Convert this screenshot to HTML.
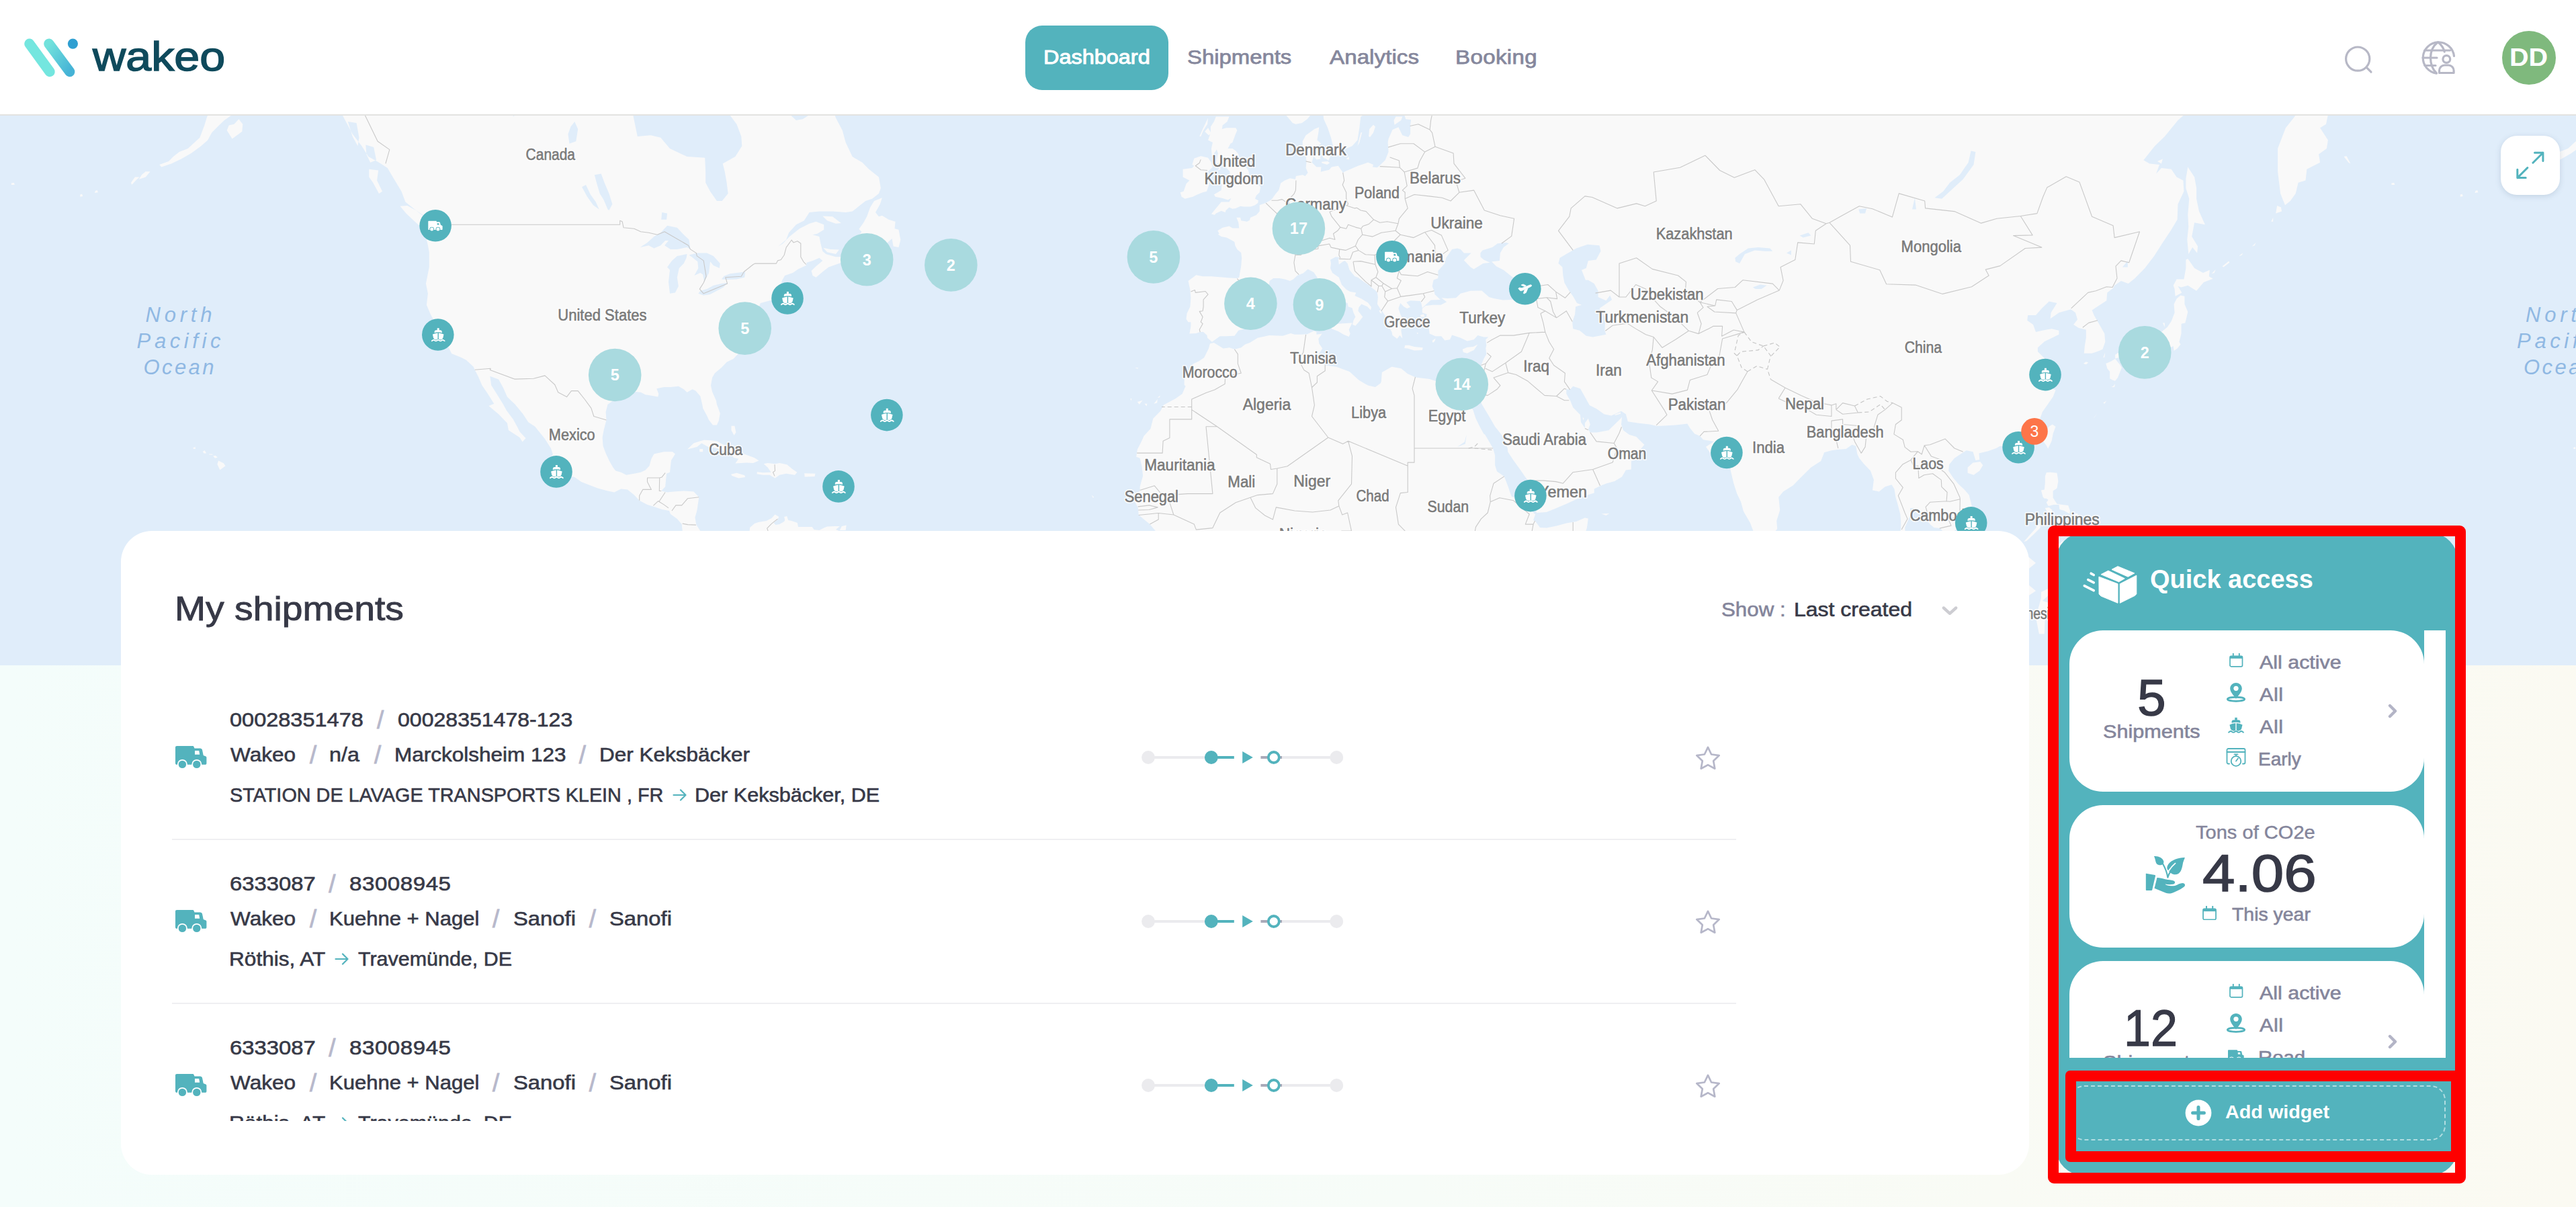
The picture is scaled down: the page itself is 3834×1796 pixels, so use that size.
<!DOCTYPE html><html lang="en"><head><meta charset="utf-8"><title>Wakeo - Dashboard</title><style>
*{box-sizing:border-box;margin:0;padding:0}
html,body{width:3834px;height:1796px;overflow:hidden}
body{position:relative;font-family:"Liberation Sans",sans-serif;background:linear-gradient(90deg,#f4fdfb 0%,#f7fcf8 55%,#fbfaf2 100%);color:#373947}
.t{position:absolute;white-space:nowrap;line-height:1;display:block;transform-origin:0 50%}
.abs{position:absolute}
header{position:absolute;left:0;top:0;width:3834px;height:172px;background:#fff;border-bottom:2px solid #e3e3e1;z-index:5}
#map{position:absolute;left:0;top:171px;width:3834px;height:819px;background:#e0edfa;overflow:hidden}
.mapsvg{position:absolute;left:0;top:0}
.mapsvg text{font-family:"Liberation Sans",sans-serif}
.lbl text{font-size:23.5px}.lbl .halo{fill:#fff;stroke:#fff;stroke-width:4px;stroke-linejoin:round;stroke-opacity:.8;fill-opacity:.8}.lbl .ink{fill:#7a7a7a;stroke:#7a7a7a;stroke-width:.55px}
.ocean text{font-size:31px;font-style:italic;fill:#8fb8e3}
.cn{font-size:23.5px;font-weight:700;fill:#fff;text-anchor:middle}
.bn{font-size:23px;fill:#fff;text-anchor:middle}
#expand{position:absolute;left:3722px;top:31px;width:88px;height:88px;border-radius:24px;background:#fff;box-shadow:0 2px 8px rgba(60,90,120,.18)}
#card{position:absolute;left:180px;top:790px;width:2840px;height:958px;border-radius:46px;background:#fff;}
#rows{position:absolute;left:0;top:210px;width:2840px;height:668px;overflow:hidden}
.hr{position:absolute;left:76px;width:2328px;height:2px;background:#efeff2}
#redbox{display:none}#redframe{position:absolute;left:3048px;top:782px;width:622px;height:979px;border:16px solid #fe0000;border-radius:9px}
#qa{position:absolute;left:3060px;top:793px;width:598px;height:956px;border-radius:41px;background:#53b3bd}
#qascroll{position:absolute;left:3080px;top:938px;width:560px;height:636px;overflow:hidden;background:linear-gradient(90deg,rgba(255,255,255,0) 0,rgba(255,255,255,0) 528px,#fff 528px)}
.w{position:absolute;left:0;width:528px;background:#fff;border-radius:50px}
#addred{position:absolute;left:3074px;top:1593px;width:590px;height:136px;border:16px solid #fe0000;border-radius:7px}
#addbtn{position:absolute;left:3080px;top:1615px;width:560px;height:82px;border:2px dashed rgba(255,255,255,.55);border-radius:22px}
</style></head><body><div id="map"><svg class="mapsvg" width="3834" height="819" viewBox="0 0 3834 819"><defs>
<g id="shipi" fill="#fff" transform="translate(.4 0)"><path d="M-1.500 -9.800h3v3h1.600c1.500 0 2.500 1 2.500 2.500v1.500c-1.800-.5-3.700-.9-5.600-.9s-3.800.4-5.600.9v-1.500c0-1.500 1-2.500 2.500-2.500h1.600z"/><path d="M-8.300 -.5c2.400-1 5-1.700 7.600-2v9.100c-.6.300-1.400.900-2.500.900s-1.900-.9-3-1.100l-1-1.900z"/><path d="M8.300 -.5c-2.400-1-5-1.700-7.600-2v9.100c.6.300 1.400.900 2.500.900s1.900-.9 3-1.100l1-1.900z"/><path d="M-10.200 9.400c1.700 0 1.700-1.500 3.400-1.500s1.700 1.500 3.400 1.500 1.700-1.500 3.400-1.500 1.700 1.500 3.400 1.500 1.700-1.500 3.400-1.500 1.700 1.500 3.400 1.500" fill="none" stroke="#fff" stroke-width="1.900"/></g>
<g id="mship"><circle r="23.8" fill="#53b3bd"/><use href="#shipi"/></g>
<g id="trucki"><path fill="#fff" d="M-10 -7h11.600v1.500h3.800c.8 0 1.300.4 1.500 1.200l.9 3.300 2.100.9c.4.200.6.500.6 1v4.600c0 .5-.3.800-.8.800h-19.700c-.5 0-.800-.3-.800-.800v-11.700c0-.5.300-.800.800-.800z"/><path d="M2.500 -3.600h2.600l.5 2.400h-3.100z" fill="#53b3bd"/><circle cx="-5.400" cy="5.300" r="3.400" fill="#53b3bd"/><circle cx="3.800" cy="5.300" r="3.400" fill="#53b3bd"/><circle cx="-5.400" cy="5.300" r="2.500" fill="#fff"/><circle cx="3.800" cy="5.300" r="2.500" fill="#fff"/></g>
<g id="mtruck"><circle r="23.800" fill="#53b3bd"/><use href="#trucki"/></g>
<g id="mplane"><circle r="23.800" fill="#53b3bd"/><g fill="#fff" stroke="#fff" stroke-width=".8" stroke-linejoin="round"><path d="M-10 -.5l1.700-1.200 3.400.6 12.400-4.700c1-.3 2.200-.1 2.300.8.100.7-.4 1.200-1 1.500l-4.800 2.500-9.500 4-1.700-.2z"/><path d="M-.6 1.400l4.700-2-2.600 6.200-3 1.500-.9-.6z"/><path d="M-5.800 -5.600l3-1.300 4.300 2.200-2.100 1.300z"/></g></g>
</defs>
<path d="M186.2 -65.1L311.1 -65.1L311.1 -1.3L308.2 2.5L304.3 15.6L297.4 33.8L279.7 49.9L266.9 55.1L258.0 62.1L251.1 69.0L237.3 74.1L240.3 77.5L255.1 72.4L269.8 65.5L284.6 56.9L299.3 46.3L309.2 37.4L315.1 26.6L323.9 17.4L333.8 8.1L341.6 2.5L346.6 -1.3L346.6 -65.1L508.9 -65.1L508.9 -1.3L514.8 10.0L524.7 28.4L538.4 46.3L548.3 62.1L564.0 70.7L576.8 79.1L587.7 97.5L597.5 113.7L603.4 129.6L619.1 142.0L630.9 149.7L645.7 158.8L649.6 163.3L652.6 173.8L654.6 187.0L648.7 185.5L650.6 176.7L643.7 176.0L631.9 172.3L636.9 194.2L638.8 204.2L638.8 226.6L633.9 251.1L636.9 265.8L634.9 282.7L640.8 296.8L648.7 310.7L653.6 315.7L654.6 323.1L659.5 330.5L665.4 341.5L672.3 355.3L686.1 360.7L693.9 364.8L704.7 374.8L706.7 379.5L711.6 388.8L717.5 402.6L725.4 414.0L735.3 429.7L727.4 433.0L742.1 445.2L754.9 458.4L756.9 469.2L773.6 480.0L777.6 486.4L782.5 481.1L773.6 471.4L769.7 463.8L763.8 452.9L753.9 439.7L749.0 430.8L742.1 419.6L731.3 402.6L729.3 388.8L742.1 393.4L749.0 406.0L754.9 419.6L766.7 430.8L778.5 445.2L786.4 457.3L796.3 463.8L811.0 482.1L819.9 496.0L822.8 504.5L819.9 512.9L825.8 522.3L832.7 527.5L842.5 535.8L855.3 538.9L865.1 546.1L876.0 550.3L889.7 555.4L904.5 559.5L914.3 561.5L924.2 556.4L934.0 557.4L943.9 565.6L951.7 573.8L963.5 579.9L973.4 582.9L985.2 586.9L996.0 589.0L998.0 594.0L1007.8 601.1L1014.7 609.1L1015.7 619.1L1025.5 623.1L1035.4 631.1L1042.3 636.0L1047.2 637.0L1057.0 644.0L1066.9 646.0L1071.8 636.0L1076.7 629.1L1086.5 634.1L1091.5 644.0L1096.4 648.9L1098.4 632.1L1091.5 625.1L1076.7 623.1L1063.9 630.1L1052.1 628.1L1042.3 619.1L1036.4 610.1L1034.4 599.0L1037.3 589.0L1039.3 575.8L1040.3 568.7L1032.4 560.5L1017.7 559.5L1002.9 560.5L993.1 561.5L984.2 559.5L990.1 553.3L991.1 543.1L992.1 533.7L997.0 531.7L998.0 522.3L999.0 513.9L1004.9 504.5L1000.9 501.3L988.1 501.3L973.4 504.5L969.4 511.8L966.5 522.3L960.6 528.6L953.7 531.7L943.9 533.7L932.1 535.8L924.2 531.7L916.3 529.6L912.4 524.4L906.5 513.9L901.6 503.4L897.6 492.8L896.6 480.0L898.6 469.2L902.5 454.0L901.6 441.9L904.5 430.8L914.3 424.1L924.2 417.4L934.0 411.7L943.9 411.7L953.7 412.8L960.6 416.2L968.5 417.4L979.3 419.6L980.3 415.1L977.3 407.2L988.1 404.9L998.0 404.9L1009.8 403.7L1017.7 408.3L1022.6 412.8L1030.5 408.3L1035.4 410.6L1042.3 418.5L1045.2 430.8L1046.2 436.4L1052.1 447.4L1055.1 454.0L1061.0 461.6L1066.9 461.6L1069.8 455.1L1071.8 444.1L1066.9 430.8L1065.9 425.2L1060.0 411.7L1058.0 402.6L1060.0 391.1L1063.9 384.2L1073.8 376.0L1081.6 367.8L1091.5 363.1L1099.3 354.7L1106.2 353.5L1115.1 347.5L1113.1 335.4L1111.1 326.8L1108.2 319.4L1107.2 306.9L1111.1 309.4L1112.1 323.1L1117.1 313.2L1120.0 305.7L1117.1 296.8L1122.0 300.6L1126.9 295.5L1130.8 282.7L1131.8 280.1L1150.5 274.9L1152.5 271.0L1160.3 268.4L1164.3 267.1L1170.2 265.8L1170.2 261.8L1164.3 263.1L1162.3 252.5L1164.3 245.7L1168.2 239.0L1180.0 234.9L1187.9 229.4L1199.7 223.9L1200.7 219.7L1209.5 216.9L1219.4 212.7L1224.3 216.9L1214.5 225.2L1207.6 232.1L1209.5 239.0L1214.5 241.7L1224.3 233.5L1233.2 226.6L1248.9 221.1L1258.7 216.9L1268.6 208.5L1265.6 194.2L1258.7 197.1L1253.8 211.3L1244.0 211.3L1234.1 208.5L1229.2 207.0L1224.3 202.8L1221.4 191.3L1219.4 181.1L1209.5 178.2L1216.4 176.7L1226.3 170.8L1226.3 163.3L1214.5 158.8L1204.6 161.8L1189.9 169.3L1175.1 181.1L1165.3 191.3L1158.4 195.6L1170.2 185.5L1174.1 175.2L1184.9 163.3L1196.8 157.3L1204.6 145.1L1219.4 143.6L1239.1 143.6L1258.7 145.1L1268.6 143.6L1278.4 135.8L1288.3 128.0L1298.1 124.8L1308.0 116.9L1310.9 108.9L1308.0 92.5L1293.2 80.8L1283.4 70.7L1268.6 62.1L1258.7 41.0L1253.8 22.9L1244.0 4.4L1239.1 -8.9L1239.1 -65.1ZM3728.6 -65.1L3853.6 -65.1L3853.6 -1.3L3850.6 2.5L3846.7 15.6L3839.8 33.8L3822.1 49.9L3809.3 55.1L3800.5 62.1L3793.6 69.0L3779.8 74.1L3782.8 77.5L3797.5 72.4L3812.3 65.5L3827.0 56.9L3841.8 46.3L3851.6 37.4L3857.5 26.6L3866.4 17.4L3876.2 8.1L3884.1 2.5L3889.0 -1.3L3889.0 -65.1L4051.4 -65.1L4051.4 -1.3L4057.3 10.0L4067.1 28.4L4080.9 46.3L4090.7 62.1L4106.5 70.7L4119.3 79.1L4130.1 97.5L4140.0 113.7L4145.9 129.6L4161.6 142.0L4173.4 149.7L4188.2 158.8L4192.1 163.3L4195.1 173.8L4197.0 187.0L4191.1 185.5L4193.1 176.7L4186.2 176.0L4174.4 172.3L4179.3 194.2L4181.3 204.2L4181.3 226.6L4176.4 251.1L4179.3 265.8L4177.3 282.7L4183.2 296.8L4191.1 310.7L4196.0 315.7L4197.0 323.1L4201.9 330.5L4207.8 341.5L4214.7 355.3L4228.5 360.7L4236.4 364.8L4247.2 374.8L4249.2 379.5L4254.1 388.8L4260.0 402.6L4267.9 414.0L4277.7 429.7L4269.8 433.0L4284.6 445.2L4297.4 458.4L4299.4 469.2L4316.1 480.0L4320.0 486.4L4324.9 481.1L4316.1 471.4L4312.2 463.8L4306.2 452.9L4296.4 439.7L4291.5 430.8L4284.6 419.6L4273.8 402.6L4271.8 388.8L4284.6 393.4L4291.5 406.0L4297.4 419.6L4309.2 430.8L4321.0 445.2L4328.9 457.3L4338.7 463.8L4353.5 482.1L4362.3 496.0L4365.3 504.5L4362.3 512.9L4368.2 522.3L4375.1 527.5L4385.0 535.8L4397.8 538.9L4407.6 546.1L4418.4 550.3L4432.2 555.4L4447.0 559.5L4456.8 561.5L4466.6 556.4L4476.5 557.4L4486.3 565.6L4494.2 573.8L4506.0 579.9L4515.8 582.9L4527.7 586.9L4538.5 589.0L4540.4 594.0L4550.3 601.1L4557.2 609.1L4558.2 619.1L4568.0 623.1L4577.8 631.1L4584.7 636.0L4589.6 637.0L4599.5 644.0L4609.3 646.0L4614.2 636.0L4619.2 629.1L4629.0 634.1L4633.9 644.0L4638.8 648.9L4640.8 632.1L4633.9 625.1L4619.2 623.1L4606.4 630.1L4594.6 628.1L4584.7 619.1L4578.8 610.1L4576.9 599.0L4579.8 589.0L4581.8 575.8L4582.8 568.7L4574.9 560.5L4560.1 559.5L4545.4 560.5L4535.5 561.5L4526.7 559.5L4532.6 553.3L4533.6 543.1L4534.5 533.7L4539.5 531.7L4540.4 522.3L4541.4 513.9L4547.3 504.5L4543.4 501.3L4530.6 501.3L4515.8 504.5L4511.9 511.8L4509.0 522.3L4503.1 528.6L4496.2 531.7L4486.3 533.7L4474.5 535.8L4466.6 531.7L4458.8 529.6L4454.8 524.4L4448.9 513.9L4444.0 503.4L4440.1 492.8L4439.1 480.0L4441.1 469.2L4445.0 454.0L4444.0 441.9L4447.0 430.8L4456.8 424.1L4466.6 417.4L4476.5 411.7L4486.3 411.7L4496.2 412.8L4503.1 416.2L4510.9 417.4L4521.7 419.6L4522.7 415.1L4519.8 407.2L4530.6 404.9L4540.4 404.9L4552.3 403.7L4560.1 408.3L4565.0 412.8L4572.9 408.3L4577.8 410.6L4584.7 418.5L4587.7 430.8L4588.7 436.4L4594.6 447.4L4597.5 454.0L4603.4 461.6L4609.3 461.6L4612.3 455.1L4614.2 444.1L4609.3 430.8L4608.3 425.2L4602.4 411.7L4600.5 402.6L4602.4 391.1L4606.4 384.2L4616.2 376.0L4624.1 367.8L4633.9 363.1L4641.8 354.7L4648.7 353.5L4657.5 347.5L4655.6 335.4L4653.6 326.8L4650.7 319.4L4649.7 306.9L4653.6 309.4L4654.6 323.1L4659.5 313.2L4662.5 305.7L4659.5 296.8L4664.4 300.6L4669.4 295.5L4673.3 282.7L4674.3 280.1L4693.0 274.9L4694.9 271.0L4702.8 268.4L4706.7 267.1L4712.6 265.8L4712.6 261.8L4706.7 263.1L4704.8 252.5L4706.7 245.7L4710.7 239.0L4722.5 234.9L4730.4 229.4L4742.2 223.9L4743.2 219.7L4752.0 216.9L4761.8 212.7L4766.8 216.9L4756.9 225.2L4750.0 232.1L4752.0 239.0L4756.9 241.7L4766.8 233.5L4775.6 226.6L4791.4 221.1L4801.2 216.9L4811.0 208.5L4808.1 194.2L4801.2 197.1L4796.3 211.3L4786.4 211.3L4776.6 208.5L4771.7 207.0L4766.8 202.8L4763.8 191.3L4761.8 181.1L4752.0 178.2L4758.9 176.7L4768.7 170.8L4768.7 163.3L4756.9 158.8L4747.1 161.8L4732.3 169.3L4717.6 181.1L4707.7 191.3L4700.8 195.6L4712.6 185.5L4716.6 175.2L4727.4 163.3L4739.2 157.3L4747.1 145.1L4761.8 143.6L4781.5 143.6L4801.2 145.1L4811.0 143.6L4820.9 135.8L4830.7 128.0L4840.6 124.8L4850.4 116.9L4853.4 108.9L4850.4 92.5L4835.7 80.8L4825.8 70.7L4811.0 62.1L4801.2 41.0L4796.3 22.9L4786.4 4.4L4781.5 -8.9L4781.5 -65.1ZM1275.5 184.0L1282.4 173.8L1278.4 170.0L1285.3 160.3L1290.2 151.2L1295.2 137.4L1301.1 128.0L1312.9 123.3L1309.9 132.7L1303.0 145.1L1308.0 151.2L1312.9 149.7L1322.7 155.8L1332.6 158.8L1331.6 169.3L1337.5 170.8L1339.4 181.1L1340.4 185.5L1337.5 197.1L1329.6 195.6L1327.6 184.0L1317.8 192.7L1308.9 194.2L1312.9 185.5L1303.0 184.0L1288.3 182.6ZM1224.3 150.5L1239.1 151.2L1251.9 161.1L1244.0 161.8L1231.2 157.3ZM1225.3 197.8L1236.1 199.9L1248.9 200.6L1244.0 207.0L1231.2 204.2ZM595.5 135.8L604.4 146.6L614.2 155.8L624.1 164.8L631.9 170.0L643.7 173.8L644.7 167.8L638.8 158.8L629.0 149.7L619.1 142.0L606.3 135.0ZM549.3 80.8L563.1 82.5L561.1 97.5L569.0 113.7L564.0 116.9L555.2 100.7L549.3 92.5ZM337.7 22.9L345.6 35.6L360.3 24.8L361.3 13.7L355.4 6.3L348.5 13.7L340.7 15.6ZM544.4 44.6L556.2 48.1L560.1 67.2L551.2 70.7L545.3 58.6ZM517.8 10.0L530.6 11.9L534.5 33.8L532.5 46.3L524.7 32.0L520.7 19.3ZM206.8 95.8L216.7 92.5L223.6 84.2L216.7 84.2L210.8 89.2ZM3749.3 95.8L3759.1 92.5L3766.0 84.2L3759.1 84.2L3753.2 89.2ZM196.0 104.0L203.9 95.8L207.8 92.5L200.9 92.5L195.0 100.7ZM3738.5 104.0L3746.3 95.8L3750.3 92.5L3743.4 92.5L3737.5 100.7ZM140.9 116.1L145.8 115.3L144.8 112.1L141.9 112.9ZM3683.4 116.1L3688.3 115.3L3687.3 112.1L3684.4 112.9ZM119.3 121.7L123.2 120.9L122.2 117.7L119.3 118.5ZM3661.7 121.7L3665.7 120.9L3664.7 117.7L3661.7 118.5ZM16.9 104.0L21.8 104.0L20.9 101.1L16.9 101.5ZM3559.4 104.0L3564.3 104.0L3563.3 101.1L3559.4 101.5ZM1023.1 497.6L1032.4 488.5L1042.3 485.3L1048.2 483.7L1057.0 484.3L1066.9 485.3L1076.7 490.7L1086.5 492.8L1096.4 498.1L1106.2 503.9L1114.1 507.1L1123.0 510.3L1129.4 514.5L1121.0 518.1L1111.1 517.6L1094.4 518.6L1099.3 511.8L1091.5 509.7L1086.5 501.3L1076.7 499.2L1066.9 496.0L1054.1 493.9L1050.1 491.7L1044.2 488.5L1037.3 493.9L1029.5 496.0ZM1126.4 534.3L1135.7 535.8L1145.6 535.8L1153.5 540.5L1160.3 535.8L1170.2 533.7L1183.0 535.8L1186.4 531.7L1180.0 527.5L1171.2 520.2L1160.3 518.1L1153.5 519.2L1142.6 518.1L1136.7 519.2L1142.6 524.4L1147.6 531.7L1135.7 532.2L1126.9 531.2ZM1088.0 534.8L1096.4 532.7L1108.2 536.3L1109.2 538.9L1099.3 540.5L1089.5 536.9ZM1197.2 533.2L1213.5 533.7L1212.5 537.9L1197.7 538.4ZM1088.5 462.7L1093.4 462.7L1095.4 472.5L1092.5 476.8L1088.5 469.2ZM1041.3 497.1L1046.2 497.1L1046.2 501.3L1041.3 501.3ZM1249.9 618.1L1252.8 612.1L1259.7 610.6L1258.7 618.1ZM1092.5 647.0L1097.4 632.1L1103.3 638.0L1108.2 630.1L1115.1 624.1L1116.1 614.1L1123.0 608.1L1128.9 606.1L1140.7 604.1L1148.5 600.1L1153.5 594.5L1159.4 598.0L1157.4 602.1L1151.5 607.1L1154.4 610.1L1160.3 609.1L1167.2 605.1L1168.2 603.1L1167.2 598.0L1171.2 597.0L1173.1 603.1L1178.1 604.1L1186.9 607.1L1187.9 613.1L1199.7 613.1L1208.6 613.1L1211.5 617.1L1219.4 618.1L1227.3 614.1L1231.2 612.6L1242.0 612.1L1249.9 612.1L1244.0 617.1L1253.8 621.1L1260.7 626.1L1268.6 634.1L1283.4 648.9L1298.1 658.9L1298.1 718.0L1071.8 718.0L1086.5 693.4L1098.4 678.6L1096.4 658.9ZM1802.9 147.4L1804.9 145.1L1813.7 134.3L1817.7 129.6L1829.5 129.6L1832.4 124.1L1827.5 126.4L1819.6 124.1L1808.8 121.7L1806.8 118.5L1817.7 112.1L1818.7 102.4L1812.8 104.0L1815.7 98.3L1813.7 94.2L1824.6 95.8L1829.5 94.2L1830.5 84.2L1825.5 79.1L1823.6 74.1L1827.5 68.1L1819.6 70.7L1809.8 72.4L1811.8 62.1L1812.8 56.9L1810.8 51.6L1803.9 62.1L1802.9 49.9L1804.9 41.0L1798.0 37.4L1801.9 26.6L1801.9 17.4L1806.8 10.0L1809.8 2.5L1824.6 2.5L1829.5 2.5L1826.5 10.0L1819.6 15.6L1818.7 21.1L1825.5 19.3L1839.3 19.3L1841.3 22.9L1838.3 30.2L1834.4 41.0L1831.4 42.8L1827.5 49.9L1834.4 49.9L1839.3 53.4L1843.3 58.6L1845.2 67.2L1847.2 74.1L1855.1 79.1L1858.0 82.5L1860.0 90.9L1857.0 92.5L1862.0 99.1L1861.0 102.4L1863.9 101.5L1871.8 102.4L1876.2 107.2L1874.7 115.3L1869.8 120.1L1867.9 124.8L1872.8 127.2L1872.3 131.1L1867.9 134.3L1861.5 136.6L1851.1 136.6L1846.2 135.8L1839.3 138.9L1834.4 139.7L1829.5 137.4L1824.6 142.0L1823.6 145.1L1817.7 142.8L1809.8 146.6L1807.8 148.8ZM1796.0 113.7L1800.0 102.4L1799.0 95.8L1798.0 84.2L1804.9 77.5L1802.9 70.7L1798.0 63.8L1787.2 61.2L1777.3 64.7L1774.4 74.1L1777.3 75.8L1774.4 79.1L1760.6 80.8L1760.6 92.5L1770.4 97.5L1765.5 102.4L1761.6 113.7L1756.7 115.3L1758.6 121.7L1763.6 124.8L1775.4 121.7L1780.3 119.3L1790.1 115.3ZM1785.2 32.0L1790.1 21.1L1798.0 4.4L1797.0 13.7L1791.1 22.9L1787.2 32.0ZM1793.1 24.8L1798.0 19.3L1802.9 27.5L1799.0 30.2ZM1811.8 83.4L1815.7 77.5L1816.7 80.8ZM1825.5 -4.2L1831.4 -5.1L1832.4 -1.3L1826.5 -2.3ZM1908.2 -65.1L1911.2 -10.9L1914.1 0.6L1923.9 11.9L1928.4 13.7L1937.7 11.9L1945.6 6.3L1953.5 -3.2L1962.3 -10.9L1966.3 -7.0L1969.2 -3.2L1970.2 6.3L1976.1 19.3L1981.0 33.8L1984.0 46.3L1985.9 56.9L1986.9 60.3L1998.7 60.3L2000.7 51.6L2012.5 46.3L2020.4 37.4L2023.3 19.3L2025.3 2.5L2032.2 -1.3L2041.0 -14.7L2041.0 -65.1ZM2037.1 32.0L2038.1 21.1L2044.0 14.7L2046.9 17.4L2044.0 26.6L2039.1 32.9ZM2020.4 46.3L2025.3 26.6L2027.3 25.7L2023.3 41.0ZM2074.5 8.1L2077.5 2.5L2087.3 2.5L2085.3 8.1L2078.4 12.8L2075.5 14.7ZM2076.5 -3.2L2081.4 -7.0L2085.3 -3.2L2081.4 0.6ZM1968.2 55.1L1974.1 50.7L1983.0 48.1L1983.0 56.9L1979.1 63.8L1977.1 68.1L1974.1 65.5L1969.2 63.8ZM1955.4 58.6L1964.3 56.9L1965.3 65.5L1959.4 66.4L1955.4 62.1ZM1967.2 69.8L1976.1 69.0L1979.1 71.5L1975.1 74.1L1967.2 71.5ZM2003.7 65.5L2007.6 62.1L2008.1 66.4ZM2088.3 -65.1L2088.3 -8.9L2090.2 -0.4L2092.2 6.3L2100.1 7.2L2099.1 15.6L2099.1 28.4L2096.1 32.9L2087.3 30.2L2081.4 18.3L2072.5 22.0L2066.6 35.6L2065.6 41.0L2066.6 55.1L2061.7 67.2L2054.8 74.1L2049.9 78.3L2043.0 77.5L2044.0 74.1L2036.1 70.7L2021.4 75.8L2001.7 84.2L1998.7 85.9L1991.8 75.8L1982.0 77.5L1978.1 81.7L1967.2 84.2L1965.8 85.0L1966.3 77.5L1959.4 77.5L1952.5 70.7L1954.4 63.8L1957.4 56.9L1959.4 47.2L1966.3 42.8L1960.4 37.4L1962.3 26.6L1963.3 18.3L1956.4 21.1L1943.6 30.2L1938.7 39.2L1938.7 49.9L1938.7 57.7L1943.6 62.1L1944.6 69.0L1943.6 79.1L1946.6 85.9L1942.6 90.9L1938.7 89.2L1928.9 90.9L1927.9 95.8L1920.0 94.2L1912.1 97.5L1906.2 101.5L1903.3 112.1L1898.4 117.7L1893.4 124.8L1890.5 127.2L1883.6 131.1L1874.7 134.3L1874.7 143.6L1869.8 148.9L1861.0 152.8L1860.0 156.5L1856.0 158.8L1847.2 157.3L1846.2 152.8L1840.3 152.8L1843.3 160.3L1844.2 168.6L1834.4 168.6L1829.5 165.6L1819.6 167.8L1812.3 172.3L1814.7 176.7L1812.8 177.7L1817.7 181.1L1825.5 182.6L1831.4 185.5L1837.4 189.1L1838.3 194.2L1841.3 199.9L1847.2 204.9L1848.2 212.7L1847.2 225.2L1844.2 241.7L1841.3 243.0L1829.5 242.4L1821.6 241.7L1802.9 240.3L1790.1 240.3L1780.3 238.3L1768.5 247.1L1771.4 260.5L1772.4 272.3L1771.4 285.3L1766.5 295.5L1765.5 303.8L1768.5 308.2L1772.4 308.2L1772.4 314.4L1770.4 325.6L1780.3 325.0L1786.2 323.1L1791.1 323.1L1796.5 328.1L1797.0 331.7L1803.9 337.8L1806.4 336.0L1815.7 329.3L1824.6 329.3L1837.4 328.7L1843.3 320.7L1852.1 318.2L1854.1 309.4L1861.0 303.8L1856.0 294.9L1861.0 285.3L1867.9 278.2L1871.8 273.6L1880.6 269.7L1890.5 263.1L1891.5 257.8L1888.5 253.8L1889.5 247.1L1895.4 243.0L1904.3 243.0L1912.1 244.4L1920.0 247.1L1924.9 244.4L1930.8 239.0L1939.7 235.6L1946.6 229.4L1955.4 234.2L1960.4 241.7L1962.3 249.1L1968.2 256.5L1975.1 260.5L1980.0 265.1L1986.9 271.7L1994.8 272.3L1999.7 277.5L2005.6 280.1L2006.6 285.3L2012.5 287.2L2014.5 294.3L2017.4 300.6L2014.5 305.7L2013.0 311.9L2017.4 313.8L2022.3 308.2L2028.3 300.6L2021.4 291.7L2022.3 286.6L2026.3 281.4L2035.1 285.3L2040.1 290.4L2041.0 285.9L2036.1 279.5L2026.3 273.6L2016.4 269.0L2018.4 264.4L2009.6 263.1L2003.7 259.8L1996.8 252.5L1992.8 241.7L1983.0 234.9L1980.0 228.0L1981.0 221.1L1980.0 215.5L1987.9 211.3L1994.3 212.0L1991.8 214.1L1992.8 222.5L1998.7 218.3L2001.7 216.9L2005.6 221.1L2008.6 230.8L2016.4 240.3L2020.9 241.7L2030.2 248.4L2037.1 253.1L2041.0 256.5L2046.9 261.1L2049.9 264.4L2050.9 271.0L2049.9 281.4L2054.8 289.2L2057.8 293.0L2062.7 300.6L2066.6 308.8L2078.4 309.4L2084.3 313.2L2075.5 310.1L2068.6 310.7L2066.6 314.4L2071.5 323.1L2072.5 328.1L2079.4 333.0L2083.4 328.1L2087.3 332.4L2085.3 320.7L2087.3 314.4L2092.2 314.4L2095.7 317.6L2095.2 310.7L2087.3 303.2L2084.3 296.8L2081.4 287.9L2084.3 280.1L2089.3 285.3L2094.2 287.9L2099.1 285.9L2093.2 278.8L2099.1 276.2L2113.9 276.9L2115.3 280.1L2116.8 287.2L2121.7 282.7L2129.6 275.6L2143.9 274.9L2135.5 267.1L2134.5 261.8L2131.6 255.1L2133.5 245.7L2140.4 243.0L2140.4 232.1L2150.3 221.1L2152.2 212.7L2161.1 199.9L2169.0 198.5L2173.9 199.9L2178.8 205.6L2189.6 205.6L2178.8 216.2L2188.6 226.6L2193.6 229.4L2207.3 221.1L2217.7 219.7L2208.3 215.5L2203.4 211.3L2203.4 205.6L2206.4 201.4L2221.1 197.1L2229.0 191.3L2241.8 189.9L2245.7 191.3L2237.8 197.1L2232.9 205.6L2231.9 216.9L2220.1 218.3L2227.0 225.2L2237.8 230.8L2249.7 240.3L2262.4 248.4L2268.4 259.1L2268.4 267.1L2254.6 274.9L2249.7 274.9L2236.9 275.6L2223.1 273.0L2216.2 271.0L2205.4 261.4L2188.6 261.8L2173.9 265.8L2167.0 272.3L2154.2 273.0L2145.3 272.3L2153.2 278.2L2144.4 282.7L2132.6 282.7L2121.7 284.0L2116.8 287.9L2116.8 294.3L2123.7 296.8L2121.7 304.4L2117.8 309.4L2125.7 308.2L2126.7 316.9L2127.6 325.6L2136.5 329.3L2145.3 329.3L2150.3 335.4L2158.1 334.2L2161.1 327.4L2173.9 331.7L2183.7 336.6L2193.6 334.2L2199.5 328.1L2208.3 330.5L2215.2 330.5L2211.3 334.2L2212.3 342.7L2211.3 347.5L2212.3 355.9L2208.3 363.1L2204.4 372.5L2202.9 376.0L2200.9 384.8L2198.0 391.1L2195.5 393.4L2189.6 395.7L2179.8 396.3L2176.8 394.0L2179.3 408.9L2180.8 414.0L2185.7 424.1L2189.6 428.6L2196.0 433.6L2198.5 426.3L2202.4 414.0L2201.4 420.7L2205.4 430.2L2218.2 451.8L2225.1 463.8L2232.9 473.5L2237.8 480.0L2243.8 496.0L2244.2 501.3L2252.6 513.9L2262.4 527.5L2275.2 546.1L2279.2 554.4L2281.1 568.7L2284.1 581.9L2287.0 592.0L2301.8 591.0L2316.6 584.9L2331.3 578.8L2342.2 573.8L2355.9 567.7L2372.7 562.6L2372.7 556.4L2383.5 551.3L2391.4 548.2L2403.2 545.1L2414.0 538.4L2419.9 528.6L2427.8 527.5L2427.8 515.0L2435.6 512.9L2438.6 501.3L2447.4 490.7L2439.6 483.2L2435.6 478.9L2424.8 475.7L2416.0 469.2L2413.0 460.5L2414.0 449.6L2411.0 452.9L2403.2 460.5L2394.3 469.2L2376.6 472.5L2366.8 472.5L2363.8 468.1L2366.8 460.5L2363.8 451.8L2358.9 458.4L2358.9 466.0L2353.0 457.3L2352.0 446.3L2341.2 435.3L2337.2 425.2L2331.3 415.1L2331.3 408.3L2337.2 408.3L2341.2 403.7L2352.0 407.2L2358.9 419.6L2365.8 431.9L2376.6 437.5L2387.4 445.2L2398.2 447.4L2413.0 440.8L2419.9 445.2L2422.8 456.2L2437.6 458.4L2455.3 460.5L2465.2 462.7L2472.0 462.7L2493.7 461.6L2511.4 459.4L2515.3 466.0L2522.2 474.6L2530.1 477.8L2535.0 483.2L2550.8 485.9L2539.0 493.9L2545.8 503.4L2552.7 509.7L2559.6 508.7L2568.5 504.5L2572.4 493.9L2575.4 504.5L2575.4 527.5L2580.3 548.2L2585.2 563.6L2591.1 575.8L2595.0 590.0L2604.9 607.1L2609.8 620.1L2612.8 630.1L2621.6 638.0L2628.5 631.1L2636.4 626.1L2645.2 616.1L2644.2 604.1L2649.2 588.0L2647.2 568.7L2654.1 560.5L2668.8 551.3L2678.7 541.0L2695.4 524.4L2710.2 515.0L2715.1 502.3L2725.9 499.2L2734.8 498.1L2747.6 497.1L2756.4 490.7L2762.3 492.8L2764.3 504.5L2767.2 510.8L2774.1 519.2L2784.0 529.6L2788.9 543.1L2786.9 558.5L2796.8 560.5L2805.6 553.3L2815.5 550.3L2819.4 556.4L2821.4 568.7L2824.3 578.8L2828.3 594.0L2829.2 604.1L2829.2 616.1L2826.3 629.1L2826.3 639.0L2838.1 650.9L2846.0 663.8L2852.9 688.5L2877.5 703.2L2884.3 704.2L2877.5 690.4L2876.5 678.6L2865.6 657.9L2855.8 649.9L2847.9 647.0L2843.0 634.1L2836.1 626.1L2835.1 614.1L2841.0 601.1L2843.0 594.0L2843.0 584.9L2851.9 584.9L2851.9 592.0L2862.7 597.0L2872.5 609.1L2878.4 614.1L2887.3 615.1L2892.2 620.1L2890.2 632.1L2896.2 630.1L2907.0 621.1L2912.9 615.1L2923.7 610.1L2933.5 603.1L2934.5 591.0L2934.5 580.9L2930.6 565.6L2923.7 557.4L2914.8 549.2L2907.0 540.0L2900.1 529.6L2901.1 520.2L2908.9 510.8L2919.8 503.4L2926.7 499.2L2936.5 501.3L2940.4 513.9L2946.3 512.9L2945.4 503.4L2959.1 500.2L2970.9 496.0L2976.8 492.8L2982.7 492.8L2995.5 488.5L3007.3 482.1L3018.2 474.6L3022.1 469.2L3030.0 460.5L3035.9 452.9L3039.8 441.9L3047.7 430.8L3055.6 419.6L3059.5 409.4L3049.7 404.9L3058.5 398.0L3058.5 391.1L3049.7 380.7L3042.8 361.9L3032.9 352.3L3032.9 346.3L3042.8 337.2L3064.4 326.8L3064.4 320.7L3053.6 318.2L3039.8 320.7L3030.0 323.1L3026.0 311.9L3017.2 305.7L3018.2 298.1L3030.0 298.1L3038.8 287.9L3049.7 277.5L3061.5 280.1L3052.6 294.3L3051.6 303.2L3064.4 294.3L3082.1 289.2L3089.0 294.3L3092.0 304.4L3086.1 311.9L3093.9 316.9L3104.8 319.4L3104.8 331.7L3102.8 343.9L3101.8 354.7L3113.6 354.7L3124.4 351.1L3129.4 348.7L3133.3 337.8L3132.3 325.6L3125.4 313.2L3116.6 298.1L3113.6 290.4L3123.5 284.0L3135.3 276.2L3136.3 264.4L3145.1 257.8L3147.1 253.8L3156.9 247.1L3167.7 251.1L3177.6 243.0L3192.3 228.0L3206.1 209.9L3218.9 189.9L3231.7 170.8L3240.6 155.8L3241.5 132.7L3250.4 113.7L3249.4 97.5L3239.6 92.5L3231.7 80.8L3216.9 79.1L3209.1 87.5L3214.0 74.1L3199.2 72.4L3190.4 67.2L3207.1 46.3L3221.9 32.0L3241.5 8.1L3256.3 -5.1L3256.3 -65.1ZM3256.3 77.5L3266.1 92.5L3269.1 108.9L3269.1 124.8L3273.0 143.6L3281.9 163.3L3266.1 160.3L3262.2 181.1L3271.1 195.6L3270.1 205.6L3263.2 197.1L3257.3 207.0L3255.3 185.5L3257.3 166.3L3256.3 148.2L3258.3 124.8L3253.4 108.9L3253.4 94.2ZM3428.5 -65.1L3428.5 -14.7L3413.7 4.4L3401.9 19.3L3390.1 49.9L3390.1 84.2L3394.1 116.9L3401.0 134.3L3408.8 128.0L3416.7 116.9L3420.6 100.7L3431.5 97.5L3433.4 80.8L3453.1 70.7L3451.1 58.6L3462.9 49.9L3464.9 37.4L3453.1 19.3L3462.0 13.7L3465.9 -5.1L3467.9 -65.1ZM3389.1 135.0L3395.0 137.4L3396.0 143.6L3387.2 146.6ZM3307.5 225.2L3317.3 217.6L3318.3 219.7L3309.4 226.6ZM3291.7 236.2L3297.6 230.1L3295.7 234.9ZM3332.1 209.9L3338.0 205.6L3337.0 208.5ZM3351.8 195.6L3357.7 189.9L3355.7 194.2ZM3380.3 158.8L3383.2 152.8L3383.2 158.8ZM3488.5 62.1L3495.4 70.7L3498.4 72.4L3492.5 61.2ZM3211.0 69.0L3218.9 65.5L3216.9 72.4ZM3237.6 269.7L3236.6 259.1L3234.7 253.8L3239.6 244.4L3250.4 244.4L3253.4 228.0L3253.4 215.5L3256.3 214.1L3266.1 228.0L3278.9 234.9L3288.8 230.8L3287.8 240.3L3293.7 243.7L3279.9 249.1L3269.1 261.8L3256.3 253.8L3246.5 256.5L3241.5 255.1L3247.4 264.4ZM3245.5 268.4L3251.4 269.7L3251.4 281.4L3256.3 293.0L3252.4 309.4L3246.5 310.7L3246.5 325.6L3243.5 337.8L3245.5 341.5L3240.6 347.5L3235.6 351.1L3234.7 343.9L3227.8 347.5L3224.8 354.7L3221.9 349.9L3218.9 354.7L3207.1 354.7L3206.1 358.3L3200.2 363.1L3195.3 368.4L3188.4 363.1L3188.4 354.7L3177.6 353.5L3167.7 358.3L3160.9 359.5L3148.1 362.5L3148.1 357.1L3157.9 349.9L3167.7 343.9L3180.5 343.3L3190.4 342.7L3197.3 341.5L3197.3 334.2L3205.1 321.9L3210.1 319.4L3207.1 328.1L3216.9 323.1L3225.8 315.7L3231.7 306.9L3236.6 294.3L3235.6 281.4L3239.6 273.6ZM3148.1 363.1L3154.9 371.3L3157.9 376.0L3152.0 391.1L3148.1 395.7L3144.1 394.6L3140.2 392.3L3140.2 381.9L3136.3 377.2L3134.3 370.1L3142.2 366.6ZM3162.8 361.9L3177.6 357.1L3183.5 359.5L3184.5 364.2L3179.6 370.1L3172.7 367.8L3167.7 376.6L3161.8 369.0ZM3218.9 309.4L3221.9 309.4L3221.9 315.7ZM3130.3 360.7L3133.3 353.5L3132.3 360.7ZM3100.8 370.1L3104.8 367.2L3108.2 368.4L3104.8 371.3ZM3115.6 451.8L3121.5 443.6L3117.6 449.6ZM3130.3 428.6L3135.3 425.2L3132.3 429.7ZM3142.2 404.9L3145.1 403.7L3148.1 400.3L3147.1 404.9ZM3054.6 460.5L3059.5 463.8L3055.6 474.6L3053.6 485.3L3048.2 496.5L3045.7 491.7L3040.8 485.3L3041.8 476.8L3046.7 468.1L3049.7 463.8ZM2928.6 524.4L2936.5 517.6L2947.3 516.0L2951.3 521.3L2946.3 529.6L2937.5 535.8L2928.6 532.7ZM3045.7 532.2L3051.6 531.7L3061.5 532.7L3063.4 545.1L3061.5 555.4L3055.6 559.5L3055.6 569.7L3061.5 578.8L3069.3 579.9L3078.2 580.9L3081.1 589.0L3080.2 593.5L3072.3 589.0L3065.4 586.9L3064.4 579.9L3056.5 579.9L3048.7 581.9L3045.7 576.8L3048.7 572.8L3045.7 570.7L3042.8 570.7L3040.8 568.7L3037.9 558.5L3042.8 557.4L3043.8 548.2L3043.8 537.9ZM3043.8 584.9L3049.7 583.9L3054.6 588.0L3052.6 596.0L3048.7 594.0ZM3082.1 594.0L3092.0 593.0L3095.9 607.1L3089.0 609.1L3087.1 601.1ZM3058.5 600.1L3070.3 603.1L3065.4 613.1L3059.5 614.1ZM3012.3 635.0L3020.1 626.1L3030.0 615.1L3034.9 605.1L3036.9 614.1L3028.0 623.1L3016.2 634.1ZM3063.4 620.1L3068.4 610.1L3074.3 610.1L3071.3 628.1ZM3082.1 604.1L3089.0 606.1L3091.0 617.1L3087.1 618.1ZM3059.5 649.9L3061.5 640.0L3072.3 633.1L3084.1 634.1L3093.9 621.1L3102.8 631.1L3103.8 648.9L3093.9 662.8L3079.2 653.9L3069.3 644.0ZM2931.6 698.3L2956.2 691.4L2970.9 683.5L2985.7 672.7L3000.5 653.9L3010.3 648.9L3017.2 655.9L3030.0 666.8L3020.1 674.7L3018.2 698.3L3030.0 708.2L3015.2 718.0L3010.3 767.3L2931.6 767.3ZM3037.9 710.1L3047.7 705.2L3069.3 709.1L3091.0 702.3L3084.1 714.1L3049.7 714.1L3039.8 722.9L3054.6 727.8L3072.3 727.8L3059.5 742.6L3067.4 762.3L3054.6 763.3L3043.8 747.5L3042.8 772.2L3034.9 772.2L3030.0 747.5L3037.9 719.0ZM3113.6 698.3L3118.5 703.2L3125.4 703.2L3118.5 713.1L3121.5 725.9L3114.6 715.0ZM2645.2 621.1L2649.2 624.1L2658.0 634.1L2664.9 646.0L2662.9 653.9L2652.1 659.8L2646.2 656.9L2644.2 647.0L2644.2 636.0ZM2796.8 662.8L2818.4 666.8L2830.2 680.6L2847.0 695.4L2857.8 701.3L2876.5 713.1L2882.4 727.8L2843.0 737.7L2823.3 703.2L2808.6 683.5ZM1981.0 313.2L1990.9 310.7L2012.5 309.4L2007.6 319.4L2009.6 325.6L2007.6 329.9L1999.7 326.8L1991.8 321.9L1982.0 318.2ZM1939.7 276.2L1949.5 271.7L1954.4 276.2L1954.4 287.9L1953.5 298.1L1948.5 298.1L1946.6 301.9L1941.7 300.6L1941.7 287.9L1939.7 280.1ZM1951.5 248.4L1952.5 255.1L1951.5 263.1L1949.5 269.7L1943.6 263.1L1943.6 256.5L1948.5 252.5ZM2091.2 342.7L2097.1 342.7L2105.0 345.1L2117.8 346.3L2116.8 349.9L2105.0 350.5L2095.2 347.5L2090.2 346.9ZM2176.8 348.7L2183.7 345.7L2192.6 345.1L2199.5 341.5L2193.6 349.9L2189.6 351.7L2183.7 354.7L2177.8 352.9ZM1882.1 293.0L1889.5 288.5L1892.9 291.7L1889.5 296.8L1885.6 295.5ZM1896.4 287.2L1901.3 288.5L1900.3 289.8L1896.4 288.5ZM1870.8 301.3L1874.7 299.4L1873.8 302.5ZM2085.3 301.9L2089.3 300.6L2097.1 305.7L2101.1 313.2L2097.1 311.9L2091.2 306.9ZM2131.6 336.0L2136.5 332.4L2135.5 336.6L2132.6 339.1ZM2113.9 298.1L2118.8 296.2L2120.7 300.6L2114.8 300.6ZM2113.9 306.3L2116.3 306.3L2115.8 310.7L2113.9 310.1ZM2120.7 315.7L2124.7 316.3L2122.7 317.6ZM2059.7 309.4L2063.7 308.2L2062.7 312.6ZM2052.4 291.1L2055.3 290.4L2056.8 295.5L2054.3 294.9ZM2108.4 323.8L2110.9 324.4L2109.9 326.2ZM2383.5 593.5L2395.3 593.0L2390.4 596.0ZM2355.4 450.7L2357.4 450.7L2356.9 454.5ZM2403.2 445.8L2412.0 442.5L2412.0 444.7L2404.1 446.9ZM1692.7 426.9L1700.6 424.7L1695.7 430.8ZM1703.5 429.7L1707.5 429.7L1706.5 433.6ZM1717.3 429.7L1722.7 423.0L1722.2 428.6ZM1722.7 420.7L1726.6 417.4L1726.2 420.2ZM1682.4 421.9L1684.3 421.9L1683.4 425.8ZM1689.3 376.0L1694.7 376.6L1692.7 377.8ZM1624.8 565.6L1628.2 568.7L1626.8 569.7ZM2176.8 394.0L2164.0 391.1L2154.2 394.6L2144.4 398.6L2127.6 392.9L2107.0 390.5L2095.2 385.3L2085.3 377.2L2071.5 374.8L2056.8 383.0L2055.8 396.9L2054.8 399.2L2046.9 404.9L2036.1 402.6L2022.3 394.6L2008.6 381.9L1988.9 374.8L1972.2 372.5L1968.2 367.8L1958.4 363.1L1964.3 353.5L1968.2 347.5L1963.3 340.3L1962.3 333.0L1967.7 325.6L1959.4 326.8L1959.4 323.1L1955.4 321.5L1945.6 326.2L1935.8 326.8L1926.9 326.8L1921.0 325.0L1909.2 328.7L1889.0 328.1L1871.8 331.7L1860.0 339.1L1853.1 341.5L1847.2 346.3L1837.4 348.7L1830.0 346.3L1820.6 347.5L1806.8 339.1L1800.9 340.3L1799.0 347.5L1792.1 361.3L1784.2 366.6L1775.4 370.7L1768.0 381.9L1762.6 391.1L1762.6 401.5L1764.5 403.7L1759.6 415.1L1749.8 421.9L1732.1 431.4L1727.1 440.8L1716.3 451.8L1712.4 467.0L1702.5 477.8L1698.6 486.4L1692.7 498.1L1691.2 508.7L1696.6 510.8L1699.6 523.3L1701.1 536.9L1696.6 553.3L1696.6 558.5L1686.8 571.7L1693.7 583.9L1694.7 595.0L1701.6 601.1L1711.4 609.1L1716.3 615.1L1724.2 624.1L1729.1 634.1L1736.0 644.0L1745.8 649.9L1752.7 655.9L1770.4 668.7L1785.2 674.7L1809.8 668.7L1839.3 668.7L1868.8 658.9L1898.4 655.9L1918.0 675.6L1947.6 678.6L1952.5 708.2L1947.6 777.1L2252.6 777.1L2262.4 727.8L2277.2 718.0L2292.0 706.2L2305.7 697.8L2326.4 676.6L2340.2 658.9L2349.0 641.0L2357.9 626.1L2361.8 615.1L2363.8 600.6L2358.9 599.5L2346.1 605.1L2331.3 607.6L2316.6 611.6L2301.8 614.6L2292.0 614.1L2285.1 604.6L2282.1 603.1L2285.1 594.5L2280.2 590.0L2275.2 582.9L2265.4 573.8L2254.6 569.7L2249.7 567.7L2247.7 562.6L2244.7 553.3L2238.8 537.9L2228.0 530.6L2225.1 521.3L2225.1 506.6L2222.1 496.0L2210.3 475.7L2208.3 474.6L2202.4 463.8L2196.5 451.8L2192.6 439.7L2188.6 431.9L2180.8 420.7L2177.8 412.8L2179.3 408.9ZM323.4 519.7L325.1 514.5L332.8 518.3L335.5 522.3L327.4 528.2ZM317.0 507.6L321.0 507.1L323.9 509.7L320.0 510.8ZM301.8 500.8L304.7 499.2L307.2 503.4L303.3 503.4ZM287.0 495.5L290.5 493.9L291.0 497.1L288.5 497.1ZM3829.5 495.5L3832.9 493.9L3833.4 497.1L3831.0 497.1ZM311.1 504.5L316.6 504.7L316.1 505.7L311.6 505.5Z" fill="#f9f9f9"/>
<path d="M929.1 -65.1L931.1 -1.3L941.9 -1.3L948.8 32.0L968.5 30.2L983.2 33.8L997.0 49.9L1022.6 62.1L1049.2 63.8L1050.1 84.2L1050.1 100.7L1057.0 113.7L1066.9 128.0L1074.7 128.0L1083.6 116.9L1081.6 100.7L1078.7 84.2L1075.7 72.4L1094.4 62.1L1104.3 46.3L1103.3 32.0L1096.4 13.7L1086.5 0.6L1091.5 -14.7L1091.5 -65.1ZM1170.2 -65.1L1174.1 -14.7L1175.1 -1.3L1184.9 8.1L1194.8 6.3L1209.5 -3.2L1214.5 -14.7L1219.4 -65.1ZM952.7 197.1L965.5 194.2L973.4 198.5L983.2 194.2L990.1 187.0L995.0 187.0L989.1 194.2L998.0 199.9L1007.8 199.9L1022.6 197.1L1027.5 199.9L1025.5 185.5L1017.7 178.2L1007.8 167.8L993.1 164.8L983.2 175.2L973.4 181.1L963.5 189.9ZM997.0 265.8L995.0 248.4L997.0 230.8L993.1 226.6L1000.0 216.9L1007.8 209.9L1022.6 207.0L1021.6 212.7L1017.7 221.1L1010.8 228.0L1007.8 241.7L1009.8 255.1L1004.9 264.4ZM1025.5 208.5L1037.3 205.6L1052.1 205.6L1061.9 209.9L1071.8 221.1L1070.8 228.0L1061.9 223.9L1057.0 218.3L1055.1 234.9L1048.2 248.4L1046.2 237.6L1042.3 234.9L1033.4 239.0L1039.3 228.0L1038.3 218.3L1029.5 211.3ZM1039.3 265.8L1047.2 268.4L1057.0 267.1L1066.9 261.8L1076.7 256.5L1082.6 249.8L1073.8 251.1L1061.9 253.8L1052.1 259.1L1042.3 261.8ZM1073.8 244.4L1081.6 245.1L1096.4 244.4L1108.2 241.7L1109.2 233.5L1096.4 234.9L1086.5 236.2L1077.7 239.7ZM906.5 142.0L911.4 132.7L906.5 116.9L899.6 100.7L894.7 87.5L884.8 89.2L888.8 104.0L892.7 116.9L898.6 126.4L904.5 140.5ZM891.7 140.5L886.8 129.6L878.9 118.5L872.0 104.0L866.1 107.2L874.0 121.7L882.9 134.3ZM847.4 42.8L857.3 39.2L860.2 21.1L855.3 10.0L849.4 17.4L845.5 28.4ZM763.8 2.5L776.6 -7.0L796.3 -14.7L796.3 -65.1L761.8 -65.1ZM984.2 155.8L992.1 155.8L993.1 146.6L985.2 145.1ZM2321.5 212.7L2331.3 207.0L2346.1 198.5L2362.8 192.7L2380.5 194.2L2382.5 202.8L2375.6 215.5L2363.8 216.9L2360.8 228.0L2354.0 230.8L2359.9 245.7L2363.8 245.7L2372.7 251.1L2378.6 261.8L2378.6 271.0L2390.4 276.2L2396.3 268.4L2399.2 274.9L2380.5 287.9L2385.4 295.5L2389.4 301.9L2388.4 320.7L2390.4 326.8L2370.7 330.5L2360.8 328.7L2351.0 320.7L2341.2 318.2L2340.2 308.2L2344.1 296.8L2345.1 285.3L2354.0 282.7L2347.1 280.1L2341.2 269.7L2335.3 261.8L2328.4 249.8L2326.4 239.0L2325.4 226.6L2319.5 221.1ZM2879.4 123.3L2890.2 124.8L2902.1 113.7L2921.7 95.8L2937.5 74.1L2940.4 55.1L2933.5 53.4L2929.6 70.7L2916.8 89.2L2902.1 100.7L2892.2 113.7ZM2582.3 212.7L2589.1 207.0L2601.9 198.5L2616.7 197.1L2634.4 198.5L2638.3 202.8L2626.5 202.8L2611.8 201.4L2597.0 207.0L2589.1 221.1L2583.2 218.3ZM2608.8 256.5L2619.6 252.5L2629.5 253.8L2621.6 259.1L2612.8 259.1ZM2182.7 475.7L2179.8 486.4L2169.0 493.9L2180.8 489.6ZM3158.9 226.6L3166.8 216.9L3166.8 226.6ZM2766.3 140.5L2778.1 138.9L2776.1 146.6L2768.2 146.6ZM2846.0 140.5L2849.9 123.3L2851.9 140.5ZM2678.7 179.6L2691.5 175.2L2695.4 179.6L2683.6 182.6ZM2659.0 205.6L2665.9 201.4L2665.9 208.5Z" fill="#e0edfa"/>
<path d="M645.7 163.3L922.7 163.3L922.7 157.3L926.2 158.8L928.1 167.8L943.9 169.3L953.7 173.8L965.5 175.2L978.3 178.2L989.1 173.8L1024.6 194.2L1027.5 199.9L1036.4 205.6L1037.3 209.9L1047.2 216.9L1051.1 240.3L1047.2 249.8L1041.3 259.1L1047.2 265.8L1082.6 251.1L1080.6 244.4L1079.7 241.7L1103.3 240.3L1107.2 233.5L1121.0 222.5L1123.9 221.1L1155.4 221.1L1157.4 216.9L1162.3 215.5L1167.2 208.5L1170.2 197.1L1178.1 186.2L1181.0 189.9L1186.9 187.7L1191.8 191.3L1191.8 211.3L1195.8 218.3L1199.7 222.5M542.4 -1.3L562.1 39.2L579.8 51.6L573.9 72.4M706.7 379.2L730.3 377.2L729.3 379.5L765.8 393.1L794.3 392.3L811.0 387.9L825.8 401.5L830.7 412.8L843.5 419.6L850.4 410.6L860.2 410.6L870.1 423.0L879.9 436.4L883.8 448.5L902.5 454.0M951.7 573.8L951.7 566.6L956.7 557.4L969.4 557.4L963.5 546.1L963.5 540.0L981.7 540.0L981.3 559.5L984.2 559.5M981.7 540.0L985.2 538.9L990.1 532.7M990.1 561.5L981.3 574.8L979.3 574.8L972.4 581.4M979.8 574.8L988.1 579.9L995.0 584.9M1000.0 589.0L1005.9 580.9L1014.7 580.9L1023.6 570.7L1040.3 568.7M1015.7 608.1L1023.6 609.6L1035.9 610.1M1043.3 638.0L1043.3 628.1L1046.2 623.1M1092.5 647.0L1099.3 640.0L1097.9 632.6M1153.0 520.2L1153.5 529.6L1150.5 531.7L1153.0 537.4M1157.4 601.1L1148.5 608.1L1141.7 615.1L1146.6 629.1M1772.4 263.1L1778.3 260.5L1779.3 264.4L1794.1 262.5L1798.0 267.1L1791.1 274.9L1791.1 285.3L1790.1 291.7L1785.2 292.4L1790.1 300.6L1787.2 308.2L1790.1 310.7L1785.2 319.4L1786.2 323.1M1841.3 243.7L1845.2 247.8L1852.1 249.8L1865.9 251.1L1873.8 255.8L1878.7 257.1L1890.0 255.8M1884.1 131.1L1890.5 137.4L1900.3 146.6L1906.2 145.9L1907.2 151.2L1916.1 155.0L1922.0 156.5L1939.7 163.3L1933.8 184.0L1927.9 187.0L1919.0 201.4L1920.0 204.2L1925.9 201.4L1927.9 208.5L1925.9 219.7L1927.9 232.1L1933.3 237.6M1892.5 127.2L1901.3 127.2L1908.2 125.6L1917.1 131.9L1918.0 136.6L1919.0 124.8L1925.9 117.7L1928.4 112.1L1928.9 97.5M1918.0 136.6L1921.0 143.6L1919.0 146.6L1923.0 151.2L1922.0 156.5M1943.6 69.0L1951.5 70.7M1998.7 85.9L2000.7 97.5L1998.2 104.0L2003.7 115.3L2003.7 124.8L2006.6 132.7L2004.6 135.0L1999.7 132.7L1986.9 141.3L1979.1 144.3L1982.0 151.2L1994.8 167.1L1990.9 172.3L1984.5 176.7L1986.9 185.5L1979.1 183.3L1967.2 187.0L1961.8 184.8L1953.5 184.8L1943.6 182.6L1933.8 184.0M1953.5 184.8L1952.5 192.0L1961.8 194.9L1961.8 199.2L1950.5 200.6L1942.1 201.4L1936.2 208.5L1927.9 208.5M1961.8 194.9L1978.6 192.0L1981.0 197.1L1993.8 199.9L1992.8 208.5L1994.8 212.7M1994.8 167.1L2003.7 169.3L2006.6 163.3L2017.4 167.1L2025.8 169.3L2027.8 178.2L2021.4 185.5L2017.4 194.9L2013.0 197.1L2002.7 201.4L1993.8 199.9M2004.6 135.0L2016.4 138.9L2019.4 138.2L2025.3 142.0L2033.2 143.6L2044.5 155.8L2037.1 162.6L2028.3 165.6L2025.8 169.3M2044.5 155.8L2053.8 160.3L2064.7 158.8L2080.9 161.8L2082.4 154.3L2095.2 138.9L2091.2 124.8L2091.2 115.3L2087.3 112.1L2094.2 105.6L2090.2 85.0L2083.4 78.3L2053.8 76.6M2083.4 78.3L2082.4 68.1L2068.6 62.9M2066.1 48.1L2084.3 42.8L2104.0 42.8L2120.7 55.1L2112.9 69.0L2109.9 79.1L2090.2 85.0M2098.6 16.5L2110.9 13.7L2128.1 22.0L2131.6 26.6L2136.0 47.2L2120.7 55.1M2128.1 22.0L2129.6 8.1L2134.5 -14.7M2136.0 47.2L2163.1 56.9L2164.0 72.4L2180.8 94.2L2167.0 99.1L2171.9 115.3L2159.1 128.0L2146.3 123.3L2126.7 120.9L2105.0 118.5L2091.2 124.8M2171.9 115.3L2193.6 112.1L2209.3 142.0L2232.9 149.7L2253.6 154.3L2249.7 180.4L2234.9 191.3M2027.8 178.2L2043.0 181.1L2055.8 175.2L2077.0 172.3L2080.9 161.8M2077.0 172.3L2084.3 178.2L2075.5 187.0L2065.6 203.5L2058.3 205.6M2084.3 178.2L2104.0 182.6L2120.7 174.5L2130.6 171.5L2145.3 178.9L2155.2 201.4L2136.5 214.8M2120.7 174.5L2135.5 194.2L2136.5 214.8L2150.8 218.3M2017.4 194.9L2021.9 201.4L2032.2 207.7L2045.0 208.5L2058.3 205.6L2069.6 218.3L2069.6 223.9L2080.4 225.2L2082.4 232.1L2085.3 237.6L2109.9 239.7L2124.7 233.5L2140.4 238.3M1992.8 214.1L2009.6 214.8L2013.5 204.2L2021.9 201.4M2082.4 232.1L2079.4 243.0L2085.3 246.4L2079.4 257.8L2084.8 270.4L2100.1 268.4L2118.3 265.8L2134.5 261.8M2118.3 265.8L2120.7 271.0L2115.3 278.2M2055.8 291.7L2062.7 281.4L2065.6 276.9L2084.8 270.4M2049.9 263.8L2051.9 254.5L2056.8 254.5L2061.7 263.1L2060.7 271.0L2065.6 276.9M2061.7 263.1L2071.5 258.5L2079.4 257.8M2014.0 218.3L2016.4 232.1L2032.2 247.8L2041.0 255.1L2041.0 245.7L2047.9 241.7L2050.9 233.5L2046.9 222.5L2025.3 217.6L2014.0 218.3M2046.0 208.5L2046.9 222.5M2041.0 245.7L2051.9 254.5M2047.9 241.7L2058.8 250.5L2056.8 254.5M2058.8 250.5L2071.5 258.5M2267.9 268.4L2277.2 269.0L2286.6 273.6L2289.0 286.6L2299.8 291.7L2293.0 295.5L2296.9 309.4L2299.8 323.1L2276.2 324.4L2252.6 328.1L2232.9 328.1L2220.1 334.8L2213.2 339.1M2276.2 324.4L2264.4 352.3L2240.8 369.0L2221.1 381.9L2210.8 377.2M2240.8 369.0L2244.7 383.6L2223.1 391.1L2232.9 402.6L2228.0 408.3L2214.2 417.4L2203.4 415.7M2244.7 383.6L2256.5 386.5L2273.3 395.7L2298.9 417.4L2316.6 418.5L2328.4 424.7L2335.3 424.7M2316.6 418.5L2328.4 407.2L2331.3 408.3M2299.8 323.1L2305.7 337.8L2312.6 348.7L2305.7 361.9L2312.6 372.5L2329.4 384.2L2328.4 396.9L2336.7 408.9M2204.4 372.5L2211.3 370.1L2208.8 380.7L2207.3 391.1L2203.4 413.4M2196.0 393.4L2202.4 414.0M2211.3 370.1L2219.2 359.5L2213.2 354.1M2252.6 243.0L2272.3 245.7L2291.0 254.5L2303.8 252.5L2315.6 263.1L2317.6 273.6L2301.8 271.7L2286.6 273.6M2315.6 263.1L2329.4 272.3L2337.2 263.8M2301.8 271.7L2307.7 277.5L2311.6 293.0L2316.6 301.9M2299.8 291.7L2316.6 301.9L2331.3 291.7L2340.2 307.6M2389.4 321.3L2400.2 313.2L2421.9 310.1L2433.7 317.6L2449.4 326.8L2461.2 330.5L2459.3 349.9L2454.3 366.6L2457.8 391.1L2467.6 396.9L2458.3 410.0L2477.0 439.1L2480.9 446.3L2465.2 461.6M2458.3 410.0L2488.8 415.1L2511.4 409.4L2515.3 394.6L2540.9 386.5L2547.8 370.1L2558.6 360.7L2563.6 333.0L2596.0 323.1M2461.2 330.5L2474.0 346.3L2493.7 334.2L2513.4 321.3L2528.1 325.6L2542.9 318.2L2549.8 314.4L2563.6 314.4L2562.6 329.3L2580.3 320.0L2596.0 323.1M2513.4 321.3L2493.7 301.9L2471.1 285.3L2459.3 272.3L2449.4 259.1L2434.6 252.5L2419.9 271.0L2410.0 271.0L2410.0 221.1L2435.6 212.7L2459.3 229.4L2497.6 239.0L2509.4 248.4L2508.5 261.8L2530.1 278.8L2556.7 258.5L2582.3 256.5L2594.1 245.7L2638.3 251.1L2648.2 261.1M2374.6 265.1L2397.3 261.1L2410.0 271.0M2648.2 261.1L2654.1 246.4L2650.1 226.6L2671.8 215.5L2675.7 189.9L2700.3 192.0L2702.3 172.3L2718.0 161.8L2697.4 154.3L2679.7 132.7L2647.2 135.8L2625.5 95.8L2611.8 81.7L2581.3 93.3L2559.6 82.5L2538.0 60.3L2500.6 78.3L2461.2 85.0L2465.2 128.0L2448.4 135.8L2435.6 131.9L2407.1 138.9L2369.7 122.5L2358.9 120.9L2338.2 138.9L2335.8 151.2L2319.5 172.3L2341.2 201.4M2648.2 261.1L2615.7 274.9L2585.2 290.4L2583.7 294.9L2596.0 323.1M2530.1 278.8L2552.7 284.0L2554.7 274.9L2577.3 277.5L2585.2 290.4M2526.2 294.3L2532.1 310.7L2528.1 325.6M2552.7 284.0L2540.9 285.3L2551.7 293.0L2583.7 294.9M2526.2 294.3L2535.0 286.6L2530.1 278.8M2718.0 161.8L2723.0 160.3L2741.7 149.7L2767.2 135.8L2786.9 139.7L2816.4 152.0L2826.3 116.9L2864.7 128.0L2865.6 138.9L2908.9 143.6L2948.3 161.1L2971.9 154.3L3007.3 150.5M2723.0 160.3L2753.5 194.2L2754.5 218.3L2797.8 230.8L2807.6 251.8L2850.9 253.1L2891.2 266.4L2934.5 255.8L2960.1 239.0L2955.2 230.1L2976.8 224.6L3014.2 198.5L3038.8 197.1L2996.5 179.6L3025.1 178.9L3007.3 150.5M3007.3 150.5L3031.9 146.6L3040.8 121.7L3046.7 108.1L3075.2 91.7L3094.9 99.9L3113.6 151.2L3145.1 164.8L3147.1 182.6L3184.5 173.8L3168.7 219.7L3156.9 216.9L3149.0 225.2L3151.0 243.0L3144.1 256.5L3135.3 255.8L3119.5 261.8L3107.7 264.4L3082.6 287.9M3099.8 316.3L3108.7 309.4L3122.0 305.7M2921.7 501.3L2908.9 496.0L2895.2 482.1L2872.5 490.7L2864.2 491.7L2860.2 505.0L2854.3 500.8L2844.0 501.3L2835.1 494.4L2832.2 483.2L2818.9 475.1L2821.4 460.5L2830.2 454.0L2830.2 435.3L2816.9 428.6L2805.6 438.6L2794.8 446.3L2785.9 475.7L2778.1 474.6L2776.1 493.9L2770.2 503.4M2735.8 496.0L2732.8 483.2L2725.9 469.2L2725.9 455.1L2742.6 452.9L2742.6 460.5L2768.2 462.7L2756.4 474.6L2760.4 485.9L2770.2 503.4M2647.2 421.9L2657.0 406.0L2680.7 417.4L2703.3 427.5L2725.9 431.9L2725.9 448.5L2703.3 446.3L2686.6 436.4L2672.8 434.1L2647.2 421.9M2732.8 438.6L2742.6 428.6L2760.4 433.0L2765.3 443.0L2742.6 445.2L2732.8 438.6M2725.9 431.9L2732.8 429.7L2732.8 438.6M2530.1 477.8L2536.0 471.4L2557.7 470.3L2548.8 454.0L2543.9 439.7L2551.7 430.8L2569.5 428.6L2586.2 408.3L2593.1 395.7L2600.9 381.9M1797.0 82.5L1787.2 81.7L1779.3 75.8L1785.2 71.5L1787.2 66.4M2635.4 393.4L2657.0 406.0M2830.2 617.1L2839.1 601.1L2835.1 592.0L2825.3 566.6L2832.2 554.4L2821.4 541.0L2821.4 532.2L2832.2 519.7L2844.0 513.4L2854.3 500.8M2844.0 513.4L2847.9 522.3L2854.8 522.3L2855.8 540.5L2863.7 535.8L2876.5 533.7L2889.3 543.1L2889.8 553.3L2898.1 561.5L2897.1 574.8L2902.1 575.3L2917.3 571.7M2864.2 491.7L2874.5 508.1L2888.3 512.9L2882.4 523.3L2894.2 531.7L2908.0 549.2L2916.8 568.7L2917.3 571.7L2916.8 595.5L2900.6 603.1L2904.0 611.1L2886.8 615.1M2897.1 574.8L2872.5 576.3L2866.1 583.4L2871.6 602.6M2844.0 654.4L2853.8 661.8L2863.7 656.4M1837.4 348.7L1842.3 355.9L1842.3 370.1L1847.2 384.2L1823.6 388.8L1823.1 400.3L1807.8 408.9L1795.0 413.4L1773.7 423.0L1773.7 438.6L1811.5 463.8L1870.3 505.5L1870.3 509.7L1890.5 519.2L1891.5 527.5L1900.8 526.0L1916.1 522.8L1976.8 480.0L1952.5 448.5L1956.4 431.9L1952.5 405.5L1948.1 384.2L1940.7 379.5L1932.8 364.2L1939.7 353.5L1943.6 326.8M1773.7 438.6L1773.7 452.9L1740.9 452.9L1740.9 480.5L1731.1 485.3L1730.1 503.1L1692.2 503.1M1811.5 463.8L1795.0 463.8L1804.9 563.6L1767.5 563.6L1753.7 564.6L1745.8 562.6L1738.9 570.7L1746.8 595.0L1777.3 609.1L1780.3 617.1L1804.9 614.6L1815.7 592.0L1839.3 576.8L1861.0 569.2L1871.8 565.6L1894.4 563.6L1900.8 549.2L1900.8 526.0M1952.5 405.5L1960.4 398.0L1960.4 388.8L1972.2 380.7L1972.2 371.9M1976.8 480.0L1998.7 489.6L2006.6 485.3L2095.2 522.3L2095.2 517.1L2105.0 517.1L2105.0 496.0L2105.0 417.4L2102.1 407.2L2106.5 390.0M2105.0 496.0L2222.1 496.0M2006.6 485.3L2012.5 507.6L2011.5 549.2L1991.8 573.8L1992.8 581.9L1980.0 588.0L1953.5 591.0L1926.9 589.0L1899.3 583.9L1894.4 602.1L1882.6 596.0L1868.8 584.9L1861.0 569.2M2095.2 522.3L2095.2 561.5L2084.3 562.6L2077.5 583.9L2081.4 609.1L2092.2 620.1M1992.8 581.9L1997.7 595.0L2005.6 592.0L2011.5 619.1L1996.8 619.1L2011.5 644.0M1696.6 558.5L1718.3 551.8L1728.1 563.6L1738.9 570.7M1693.7 582.9L1710.4 580.9L1723.2 583.9L1710.4 587.5L1694.2 588.0M1694.7 595.5L1724.2 592.5L1746.8 595.0M1711.4 609.1L1724.2 602.1L1724.2 592.5M2238.8 537.9L2223.1 548.2L2217.7 566.6L2218.2 575.8L2231.9 569.7L2252.6 573.8L2276.2 594.0L2270.3 609.1L2282.1 609.1L2284.6 604.1M2218.2 575.8L2214.2 592.0L2204.4 601.1L2196.5 613.1L2194.5 624.1M2282.1 609.1L2280.2 619.1L2292.0 629.1L2321.5 639.0L2331.3 639.0L2341.2 624.1L2341.2 606.1M2280.2 554.4L2284.1 544.1L2296.9 544.1L2315.6 545.6L2326.4 548.2L2341.2 531.7L2370.7 527.5L2400.2 517.1L2406.6 496.0L2402.2 488.5L2376.1 485.9L2366.8 472.5M2370.7 527.5L2381.5 551.8M2402.2 488.5L2410.0 473.5L2413.5 464.3M2358.9 466.5L2363.8 468.7" fill="none" stroke="#c9c9c9" stroke-width="1.1" stroke-linejoin="round"/>
<path d="M1773.7 434.5L1729.1 434.5M2185.7 496.0L2194.5 493.9L2200.5 487.5M2194.5 496.0L2222.1 498.6M2596.0 323.1L2606.9 337.8L2624.6 343.9L2635.4 358.3L2630.5 378.4L2635.4 393.4M2600.9 381.9L2592.1 376.0L2585.2 358.3L2591.1 352.3L2616.7 349.9L2624.6 343.9M2600.9 381.9L2614.7 373.7L2630.5 378.4M2585.2 358.3L2581.3 354.7L2587.2 328.1L2596.0 323.1M2624.6 343.9L2641.3 339.1L2649.2 345.1L2636.4 358.3M2760.4 433.0L2779.1 423.0L2798.7 418.5L2808.6 426.3L2816.9 428.6M2765.3 443.0L2782.0 441.9L2798.7 430.8L2805.6 438.6" fill="none" stroke="#c4c4c4" stroke-width="1.1" stroke-dasharray="6 4"/>
<g class="ocean"><text x="216.5" y="308.2" textLength="99.0" lengthAdjust="spacing">North</text><text x="203.6" y="347.0" textLength="125.0" lengthAdjust="spacing">Pacific</text><text x="213.5" y="385.6" textLength="105.0" lengthAdjust="spacing">Ocean</text><text x="3759.0" y="308.2" textLength="99.0" lengthAdjust="spacing">North</text><text x="3746.1" y="347.0" textLength="125.0" lengthAdjust="spacing">Pacific</text><text x="3756.0" y="385.6" textLength="105.0" lengthAdjust="spacing">Ocean</text></g>
<g class="lbl"><defs><text id="L0" x="782.6" y="67.3" textLength="73.4" lengthAdjust="spacingAndGlyphs">Canada</text><text id="L1" x="830.3" y="305.8" textLength="132.3" lengthAdjust="spacingAndGlyphs">United States</text><text id="L2" x="816.8" y="484.4" textLength="68.9" lengthAdjust="spacingAndGlyphs">Mexico</text><text id="L3" x="1055.3" y="506.0" textLength="49.9" lengthAdjust="spacingAndGlyphs">Cuba</text><text id="L4" x="1804.3" y="77.3" textLength="64.1" lengthAdjust="spacingAndGlyphs">United</text><text id="L5" x="1792.4" y="102.7" textLength="87.6" lengthAdjust="spacingAndGlyphs">Kingdom</text><text id="L6" x="1913.2" y="59.8" textLength="90.5" lengthAdjust="spacingAndGlyphs">Denmark</text><text id="L7" x="1913.2" y="141.1" textLength="90.5" lengthAdjust="spacingAndGlyphs">Germany</text><text id="L8" x="2016.0" y="124.3" textLength="67.1" lengthAdjust="spacingAndGlyphs">Poland</text><text id="L9" x="2098.0" y="101.6" textLength="76.0" lengthAdjust="spacingAndGlyphs">Belarus</text><text id="L10" x="2129.3" y="168.6" textLength="77.5" lengthAdjust="spacingAndGlyphs">Ukraine</text><text id="L11" x="2058.0" y="219.3" textLength="90.3" lengthAdjust="spacingAndGlyphs">Romania</text><text id="L12" x="2060.0" y="315.9" textLength="68.6" lengthAdjust="spacingAndGlyphs">Greece</text><text id="L13" x="2172.2" y="309.5" textLength="68.2" lengthAdjust="spacingAndGlyphs">Turkey</text><text id="L14" x="2464.7" y="185.4" textLength="114.0" lengthAdjust="spacingAndGlyphs">Kazakhstan</text><text id="L15" x="2426.7" y="274.9" textLength="108.9" lengthAdjust="spacingAndGlyphs">Uzbekistan</text><text id="L16" x="2375.3" y="308.8" textLength="137.9" lengthAdjust="spacingAndGlyphs">Turkmenistan</text><text id="L17" x="2450.2" y="373.1" textLength="117.4" lengthAdjust="spacingAndGlyphs">Afghanistan</text><text id="L18" x="2267.2" y="382.2" textLength="38.8" lengthAdjust="spacingAndGlyphs">Iraq</text><text id="L19" x="2374.9" y="387.8" textLength="38.8" lengthAdjust="spacingAndGlyphs">Iran</text><text id="L20" x="2482.7" y="438.5" textLength="85.7" lengthAdjust="spacingAndGlyphs">Pakistan</text><text id="L21" x="2657.1" y="437.8" textLength="57.8" lengthAdjust="spacingAndGlyphs">Nepal</text><text id="L22" x="2688.8" y="479.9" textLength="114.8" lengthAdjust="spacingAndGlyphs">Bangladesh</text><text id="L23" x="2608.0" y="503.0" textLength="48.0" lengthAdjust="spacingAndGlyphs">India</text><text id="L24" x="2392.7" y="512.3" textLength="57.7" lengthAdjust="spacingAndGlyphs">Oman</text><text id="L25" x="2236.2" y="490.7" textLength="124.8" lengthAdjust="spacingAndGlyphs">Saudi Arabia</text><text id="L26" x="2290.0" y="568.6" textLength="72.0" lengthAdjust="spacingAndGlyphs">Yemen</text><text id="L27" x="2125.8" y="456.4" textLength="55.6" lengthAdjust="spacingAndGlyphs">Egypt</text><text id="L28" x="2011.0" y="450.8" textLength="52.2" lengthAdjust="spacingAndGlyphs">Libya</text><text id="L29" x="1849.7" y="438.9" textLength="71.5" lengthAdjust="spacingAndGlyphs">Algeria</text><text id="L30" x="1919.9" y="370.2" textLength="69.3" lengthAdjust="spacingAndGlyphs">Tunisia</text><text id="L31" x="1759.7" y="390.8" textLength="82.0" lengthAdjust="spacingAndGlyphs">Morocco</text><text id="L32" x="1703.2" y="529.1" textLength="105.5" lengthAdjust="spacingAndGlyphs">Mauritania</text><text id="L33" x="1827.3" y="554.1" textLength="41.0" lengthAdjust="spacingAndGlyphs">Mali</text><text id="L34" x="1925.3" y="553.3" textLength="54.8" lengthAdjust="spacingAndGlyphs">Niger</text><text id="L35" x="2018.5" y="574.6" textLength="49.2" lengthAdjust="spacingAndGlyphs">Chad</text><text id="L36" x="2124.4" y="590.6" textLength="61.8" lengthAdjust="spacingAndGlyphs">Sudan</text><text id="L37" x="1673.8" y="575.7" textLength="80.1" lengthAdjust="spacingAndGlyphs">Senegal</text><text id="L38" x="2829.6" y="204.4" textLength="89.4" lengthAdjust="spacingAndGlyphs">Mongolia</text><text id="L39" x="2834.8" y="353.5" textLength="55.2" lengthAdjust="spacingAndGlyphs">China</text><text id="L40" x="2846.5" y="527.2" textLength="46.2" lengthAdjust="spacingAndGlyphs">Laos</text><text id="L41" x="2842.7" y="603.6" textLength="98.6" lengthAdjust="spacingAndGlyphs">Cambodia</text><text id="L42" x="3013.8" y="610.0" textLength="111.0" lengthAdjust="spacingAndGlyphs">Philippines</text><text id="L43" x="1903.7" y="631.7" textLength="72.0" lengthAdjust="spacingAndGlyphs">Nigeria</text><text id="L44" x="2977.7" y="749.7" textLength="84.0" lengthAdjust="spacingAndGlyphs">Indonesia</text></defs><g class="halo"><use href="#L0"/><use href="#L1"/><use href="#L2"/><use href="#L3"/><use href="#L4"/><use href="#L5"/><use href="#L6"/><use href="#L7"/><use href="#L8"/><use href="#L9"/><use href="#L10"/><use href="#L11"/><use href="#L12"/><use href="#L13"/><use href="#L14"/><use href="#L15"/><use href="#L16"/><use href="#L17"/><use href="#L18"/><use href="#L19"/><use href="#L20"/><use href="#L21"/><use href="#L22"/><use href="#L23"/><use href="#L24"/><use href="#L25"/><use href="#L26"/><use href="#L27"/><use href="#L28"/><use href="#L29"/><use href="#L30"/><use href="#L31"/><use href="#L32"/><use href="#L33"/><use href="#L34"/><use href="#L35"/><use href="#L36"/><use href="#L37"/><use href="#L38"/><use href="#L39"/><use href="#L40"/><use href="#L41"/><use href="#L42"/><use href="#L43"/><use href="#L44"/></g><g class="ink"><use href="#L0"/><use href="#L1"/><use href="#L2"/><use href="#L3"/><use href="#L4"/><use href="#L5"/><use href="#L6"/><use href="#L7"/><use href="#L8"/><use href="#L9"/><use href="#L10"/><use href="#L11"/><use href="#L12"/><use href="#L13"/><use href="#L14"/><use href="#L15"/><use href="#L16"/><use href="#L17"/><use href="#L18"/><use href="#L19"/><use href="#L20"/><use href="#L21"/><use href="#L22"/><use href="#L23"/><use href="#L24"/><use href="#L25"/><use href="#L26"/><use href="#L27"/><use href="#L28"/><use href="#L29"/><use href="#L30"/><use href="#L31"/><use href="#L32"/><use href="#L33"/><use href="#L34"/><use href="#L35"/><use href="#L36"/><use href="#L37"/><use href="#L38"/><use href="#L39"/><use href="#L40"/><use href="#L41"/><use href="#L42"/><use href="#L43"/><use href="#L44"/></g></g>
<g><circle cx="1290.2" cy="215.2" r="39.3" fill="#a9dadf"/><text class="cn" x="1290.2" y="223.5">3</text><circle cx="1415.4" cy="223.4" r="39.3" fill="#a9dadf"/><text class="cn" x="1415.4" y="231.7">2</text><circle cx="1716.9" cy="211.4" r="39.3" fill="#a9dadf"/><text class="cn" x="1716.9" y="219.7">5</text><circle cx="1108.7" cy="317.6" r="39.3" fill="#a9dadf"/><text class="cn" x="1108.7" y="325.9">5</text><circle cx="915.2" cy="387.0" r="39.3" fill="#a9dadf"/><text class="cn" x="915.2" y="395.3">5</text><circle cx="1932.9" cy="168.9" r="39.3" fill="#a9dadf"/><text class="cn" x="1932.9" y="177.2">17</text><circle cx="1861.4" cy="280.7" r="39.3" fill="#a9dadf"/><text class="cn" x="1861.4" y="289.0">4</text><circle cx="1963.9" cy="282.2" r="39.3" fill="#a9dadf"/><text class="cn" x="1963.9" y="290.5">9</text><circle cx="2175.8" cy="400.8" r="39.3" fill="#a9dadf"/><text class="cn" x="2175.8" y="409.1">14</text><circle cx="3192.2" cy="353.4" r="39.3" fill="#a9dadf"/><text class="cn" x="3192.2" y="361.7">2</text><use href="#mship" x="651.8" y="327.0"/><use href="#mship" x="1172.0" y="272.9"/><use href="#mship" x="828.0" y="530.9"/><use href="#mship" x="1319.9" y="446.6"/><use href="#mship" x="1248.0" y="552.9"/><use href="#mship" x="2277.9" y="566.6"/><use href="#mship" x="2569.9" y="502.5"/><use href="#mship" x="3044.0" y="386.6"/><use href="#mship" x="3004.1" y="494.7"/><use href="#mship" x="2933.7" y="606.9"/><use href="#mtruck" x="648.1" y="164.8"/><use href="#mtruck" x="2071.9" y="210.7"/><use href="#mplane" x="2269.8" y="258.8"/><circle cx="3028" cy="470.9" r="19.8" fill="#fd7549"/><text class="bn" x="3028" y="478.9">3</text></g>
</svg><div id="expand"><svg width="88" height="88" viewBox="0 0 88 88" fill="none" stroke="#53b3bd" stroke-width="3" stroke-linecap="round" stroke-linejoin="round"><path d="M50.500 25.200h12.400v12.400M62.900 25.200l-15 15M37.200 62.600h-12.400v-12.400M24.800 62.600l15-15"/></svg></div></div><header><svg class="abs" style="left:30px;top:50px" width="100" height="72" viewBox="30 50 100 72"><defs><linearGradient id="lg" x1="0" y1="0" x2="1" y2="1"><stop offset="0" stop-color="#72e2dc"/><stop offset="1" stop-color="#45b3d6"/></linearGradient></defs>
<line x1="43.8" y1="65.1" x2="74.1" y2="106.7" stroke="#74e6df" stroke-width="15.2" stroke-linecap="round"/>
<line x1="72.8" y1="65.1" x2="103.8" y2="106.7" stroke="url(#lg)" stroke-width="15.2" stroke-linecap="round"/>
<circle cx="108.4" cy="65.1" r="7.6" fill="#2f9fd1"/></svg><span class="t" style="left:138.2px;top:54.4px;font-size:60.50px;color:#0f4a5c;-webkit-text-stroke:1.50px #0f4a5c;transform:scaleX(1.1272);">wakeo</span><nav><div class="abs" style="left:1526px;top:38px;width:213px;height:96px;border-radius:25px;background:#53b3bd"></div><a class="t" style="left:1552.6px;top:70.2px;font-size:29.30px;color:#fff;-webkit-text-stroke:1.00px #fff;transform:scaleX(1.1072);">Dashboard</a><a class="t" style="left:1766.5px;top:70.2px;font-size:29.30px;color:#85879c;-webkit-text-stroke:0.75px #85879c;transform:scaleX(1.1220);">Shipments</a><a class="t" style="left:1978.6px;top:70.2px;font-size:29.30px;color:#85879c;letter-spacing:0.06px;-webkit-text-stroke:0.75px #85879c;transform:scaleX(1.1300);">Analytics</a><a class="t" style="left:2165.7px;top:70.2px;font-size:29.30px;color:#85879c;letter-spacing:0.29px;-webkit-text-stroke:0.75px #85879c;transform:scaleX(1.1300);">Booking</a></nav><svg class="abs" style="left:3480px;top:60px" width="60" height="60" viewBox="3480 60 60 60" fill="none" stroke="#b7b8c6" stroke-width="3.2" stroke-linecap="round"><circle cx="3509.2" cy="87.6" r="17.6"/><path d="M3522 100.2l7 7"/></svg><svg class="abs" style="left:3600px;top:56px" width="60" height="60" viewBox="3600 56 60 60" fill="none" stroke="#b7b8c6" stroke-width="3.2" stroke-linecap="round" stroke-linejoin="round">
<path d="M3652.5 83.500a23.200 23.200 0 1 0-26 25.600"/><path d="M3628 63c-7.500 6-10.500 14-10.500 23s3 17 8.500 22.500"/><path d="M3629 63c5 4 8 9 9.200 14"/><path d="M3608.500 75h38"/><path d="M3606 86h21"/><path d="M3609 97.500h16"/>
<circle cx="3641.300" cy="88" r="5.400"/><path d="M3630.500 108.500v-3.500a8 8 0 0 1 8-8h5.600a8 8 0 0 1 8 8v3.500z"/></svg><div class="abs" style="left:3724px;top:46px;width:80px;height:80px;border-radius:50%;background:#7fb97d"></div><span class="t" style="left:3735.2px;top:67.3px;font-size:37.00px;color:#fff;font-weight:700;transform:scaleX(1.0690);">DD</span></header><main id="card"><h1 class="t" style="left:80.4px;top:91.4px;font-size:50.00px;color:#373947;-webkit-text-stroke:0.90px #373947;transform:scaleX(1.1052);font-weight:400;">My shipments</h1><span class="t" style="left:2382.1px;top:101.8px;font-size:29.30px;color:#84859b;-webkit-text-stroke:0.60px #84859b;transform:scaleX(1.0676);">Show :</span><span class="t" style="left:2490.0px;top:101.8px;font-size:29.30px;color:#373947;-webkit-text-stroke:0.60px #373947;transform:scaleX(1.0920);">Last created</span><svg class="abs" style="left:2708.0px;top:110.0px" width="28" height="18" viewBox="0 0 28 18" fill="none" stroke="#cdcdd2" stroke-width="4.400" stroke-linecap="round" stroke-linejoin="round"><path d="M4.800 4.500l9.200 8.300 9.200-8.300"/></svg><div id="rows"><span class="t" style="left:162.2px;top:56.3px;font-size:29.30px;color:#373947;-webkit-text-stroke:0.60px #373947;transform:scaleX(1.1092);">00028351478</span><span class="t" style="left:381.0px;top:54.0px;font-size:36.60px;color:#b7b8cb;-webkit-text-stroke:0.90px #b7b8cb;">/</span><span class="t" style="left:411.5px;top:56.3px;font-size:29.30px;color:#373947;-webkit-text-stroke:0.60px #373947;transform:scaleX(1.0941);">00028351478-123</span><span class="t" style="left:163.3px;top:108.2px;font-size:29.30px;color:#373947;-webkit-text-stroke:0.60px #373947;transform:scaleX(1.0784);">Wakeo</span><span class="t" style="left:281.0px;top:105.9px;font-size:36.60px;color:#b7b8cb;-webkit-text-stroke:0.90px #b7b8cb;">/</span><span class="t" style="left:310.1px;top:108.2px;font-size:29.30px;color:#373947;-webkit-text-stroke:0.60px #373947;transform:scaleX(1.1009);">n/a</span><span class="t" style="left:377.0px;top:105.9px;font-size:36.60px;color:#b7b8cb;-webkit-text-stroke:0.90px #b7b8cb;">/</span><span class="t" style="left:406.6px;top:108.2px;font-size:29.30px;color:#373947;-webkit-text-stroke:0.60px #373947;transform:scaleX(1.0749);">Marckolsheim 123</span><span class="t" style="left:681.8px;top:105.9px;font-size:36.60px;color:#b7b8cb;-webkit-text-stroke:0.90px #b7b8cb;">/</span><span class="t" style="left:712.4px;top:108.2px;font-size:29.30px;color:#373947;-webkit-text-stroke:0.60px #373947;transform:scaleX(1.0745);">Der Keksbäcker</span><span class="t" style="left:162.0px;top:168.2px;font-size:29.30px;color:#373947;-webkit-text-stroke:0.60px #373947;transform:scaleX(0.9837);">STATION DE LAVAGE TRANSPORTS KLEIN , FR</span><svg class="abs" style="left:821.0px;top:172.5px" width="22" height="20" viewBox="0 0 22 20" fill="none" stroke="#53b3bd" stroke-width="2.2" stroke-linecap="round" stroke-linejoin="round"><path d="M1.500 10h18M12 2.500l7.500 7.500-7.500 7.500"/></svg><span class="t" style="left:854.3px;top:168.2px;font-size:29.30px;color:#373947;-webkit-text-stroke:0.60px #373947;transform:scaleX(1.0435);">Der Keksbäcker, DE</span><svg class="abs" style="left:80.6px;top:110.2px" width="47.0" height="34.0" viewBox="0 0 47 34"><path fill="#53b3bd" d="M2.200 0h23.300c1.200 0 1.700.4 2.100 1.400l.9 2.100h8.100c2 0 3.100.9 3.500 2.800l1.600 7.700 3.600 1.600c.8.400 1.100.9 1.100 1.800v8.300c0 1.300-.8 2.100-2.100 2.100h-42.100c-1.300 0-2.200-.8-2.200-2.100v-23.600c0-1.300.9-2.100 2.200-2.100z"/><path fill="#fff" d="M29 7h6.200l1 5.700h-7.200z"/><circle cx="10.400" cy="27.400" r="7.500" fill="#fff"/><circle cx="31.800" cy="27.400" r="7.500" fill="#fff"/><circle cx="10.400" cy="27.400" r="5.700" fill="#53b3bd"/><circle cx="31.800" cy="27.400" r="5.700" fill="#53b3bd"/></svg><svg class="abs" style="left:1516px;top:111.8px" width="320" height="30" viewBox="1696 0 320 30"><g transform="translate(0,15)">
<path d="M1709 0H1803" stroke="#ebebee" stroke-width="4.200"/><path d="M1906 0H1989" stroke="#ebebee" stroke-width="4.200"/>
<circle cx="1709" r="9.900" fill="#ebebee"/><circle cx="1989.300" r="9.900" fill="#ebebee"/>
<path d="M1803 0H1836.800" stroke="#53b3bd" stroke-width="4.200"/><circle cx="1802.800" r="9.900" fill="#53b3bd"/>
<path d="M1849.200 -9l15.600 9-15.600 9z" fill="#53b3bd"/>
<path d="M1876.400 0H1887M1905 0h3" stroke="#a9aab9" stroke-width="4.200"/>
<circle cx="1895.800" r="8" fill="#fff" stroke="#53b3bd" stroke-width="3.800"/></g></svg><svg class="abs" style="left:2342.4px;top:107.8px" width="40" height="40" viewBox="0 0 40 40"><path d="M20.0 3.9L25.1 14.5L36.7 16.1L28.2 24.2L30.3 35.7L20.0 30.1L9.7 35.7L11.8 24.2L3.3 16.1L14.9 14.5Z" fill="none" stroke="#b6b7c9" stroke-width="2.700" stroke-linejoin="round"/></svg><span class="t" style="left:161.7px;top:300.4px;font-size:29.30px;color:#373947;-webkit-text-stroke:0.60px #373947;transform:scaleX(1.1206);">6333087</span><span class="t" style="left:309.3px;top:298.1px;font-size:36.60px;color:#b7b8cb;-webkit-text-stroke:0.90px #b7b8cb;">/</span><span class="t" style="left:339.6px;top:300.4px;font-size:29.30px;color:#373947;letter-spacing:0.47px;-webkit-text-stroke:0.60px #373947;transform:scaleX(1.1300);">83008945</span><span class="t" style="left:163.3px;top:352.3px;font-size:29.30px;color:#373947;-webkit-text-stroke:0.60px #373947;transform:scaleX(1.0784);">Wakeo</span><span class="t" style="left:281.0px;top:350.0px;font-size:36.60px;color:#b7b8cb;-webkit-text-stroke:0.90px #b7b8cb;">/</span><span class="t" style="left:310.2px;top:352.3px;font-size:29.30px;color:#373947;-webkit-text-stroke:0.60px #373947;transform:scaleX(1.0587);">Kuehne + Nagel</span><span class="t" style="left:553.0px;top:350.0px;font-size:36.60px;color:#b7b8cb;-webkit-text-stroke:0.90px #b7b8cb;">/</span><span class="t" style="left:583.7px;top:352.3px;font-size:29.30px;color:#373947;-webkit-text-stroke:0.60px #373947;transform:scaleX(1.1185);">Sanofi</span><span class="t" style="left:696.8px;top:350.0px;font-size:36.60px;color:#b7b8cb;-webkit-text-stroke:0.90px #b7b8cb;">/</span><span class="t" style="left:726.5px;top:352.3px;font-size:29.30px;color:#373947;-webkit-text-stroke:0.60px #373947;transform:scaleX(1.1185);">Sanofi</span><span class="t" style="left:160.8px;top:412.3px;font-size:29.30px;color:#373947;-webkit-text-stroke:0.60px #373947;transform:scaleX(1.0785);">Röthis, AT</span><svg class="abs" style="left:318.0px;top:416.6px" width="22" height="20" viewBox="0 0 22 20" fill="none" stroke="#53b3bd" stroke-width="2.2" stroke-linecap="round" stroke-linejoin="round"><path d="M1.500 10h18M12 2.500l7.500 7.500-7.500 7.500"/></svg><span class="t" style="left:353.0px;top:412.3px;font-size:29.30px;color:#373947;-webkit-text-stroke:0.60px #373947;transform:scaleX(1.0390);">Travemünde, DE</span><svg class="abs" style="left:80.6px;top:354.3px" width="47.0" height="34.0" viewBox="0 0 47 34"><path fill="#53b3bd" d="M2.200 0h23.300c1.200 0 1.700.4 2.100 1.400l.9 2.100h8.100c2 0 3.100.9 3.500 2.800l1.600 7.700 3.600 1.600c.8.400 1.100.9 1.100 1.800v8.300c0 1.300-.8 2.100-2.100 2.100h-42.100c-1.300 0-2.200-.8-2.200-2.100v-23.600c0-1.300.9-2.100 2.200-2.100z"/><path fill="#fff" d="M29 7h6.200l1 5.700h-7.200z"/><circle cx="10.400" cy="27.400" r="7.500" fill="#fff"/><circle cx="31.800" cy="27.400" r="7.500" fill="#fff"/><circle cx="10.400" cy="27.400" r="5.700" fill="#53b3bd"/><circle cx="31.800" cy="27.400" r="5.700" fill="#53b3bd"/></svg><svg class="abs" style="left:1516px;top:355.9px" width="320" height="30" viewBox="1696 0 320 30"><g transform="translate(0,15)">
<path d="M1709 0H1803" stroke="#ebebee" stroke-width="4.200"/><path d="M1906 0H1989" stroke="#ebebee" stroke-width="4.200"/>
<circle cx="1709" r="9.900" fill="#ebebee"/><circle cx="1989.300" r="9.900" fill="#ebebee"/>
<path d="M1803 0H1836.800" stroke="#53b3bd" stroke-width="4.200"/><circle cx="1802.800" r="9.900" fill="#53b3bd"/>
<path d="M1849.200 -9l15.600 9-15.600 9z" fill="#53b3bd"/>
<path d="M1876.400 0H1887M1905 0h3" stroke="#a9aab9" stroke-width="4.200"/>
<circle cx="1895.800" r="8" fill="#fff" stroke="#53b3bd" stroke-width="3.800"/></g></svg><svg class="abs" style="left:2342.4px;top:351.9px" width="40" height="40" viewBox="0 0 40 40"><path d="M20.0 3.9L25.1 14.5L36.7 16.1L28.2 24.2L30.3 35.7L20.0 30.1L9.7 35.7L11.8 24.2L3.3 16.1L14.9 14.5Z" fill="none" stroke="#b6b7c9" stroke-width="2.700" stroke-linejoin="round"/></svg><span class="t" style="left:161.7px;top:544.4px;font-size:29.30px;color:#373947;-webkit-text-stroke:0.60px #373947;transform:scaleX(1.1206);">6333087</span><span class="t" style="left:309.3px;top:542.1px;font-size:36.60px;color:#b7b8cb;-webkit-text-stroke:0.90px #b7b8cb;">/</span><span class="t" style="left:339.6px;top:544.4px;font-size:29.30px;color:#373947;letter-spacing:0.47px;-webkit-text-stroke:0.60px #373947;transform:scaleX(1.1300);">83008945</span><span class="t" style="left:163.3px;top:596.3px;font-size:29.30px;color:#373947;-webkit-text-stroke:0.60px #373947;transform:scaleX(1.0784);">Wakeo</span><span class="t" style="left:281.0px;top:594.0px;font-size:36.60px;color:#b7b8cb;-webkit-text-stroke:0.90px #b7b8cb;">/</span><span class="t" style="left:310.2px;top:596.3px;font-size:29.30px;color:#373947;-webkit-text-stroke:0.60px #373947;transform:scaleX(1.0587);">Kuehne + Nagel</span><span class="t" style="left:553.0px;top:594.0px;font-size:36.60px;color:#b7b8cb;-webkit-text-stroke:0.90px #b7b8cb;">/</span><span class="t" style="left:583.7px;top:596.3px;font-size:29.30px;color:#373947;-webkit-text-stroke:0.60px #373947;transform:scaleX(1.1185);">Sanofi</span><span class="t" style="left:696.8px;top:594.0px;font-size:36.60px;color:#b7b8cb;-webkit-text-stroke:0.90px #b7b8cb;">/</span><span class="t" style="left:726.5px;top:596.3px;font-size:29.30px;color:#373947;-webkit-text-stroke:0.60px #373947;transform:scaleX(1.1185);">Sanofi</span><span class="t" style="left:160.8px;top:656.3px;font-size:29.30px;color:#373947;-webkit-text-stroke:0.60px #373947;transform:scaleX(1.0785);">Röthis, AT</span><svg class="abs" style="left:318.0px;top:660.6px" width="22" height="20" viewBox="0 0 22 20" fill="none" stroke="#53b3bd" stroke-width="2.2" stroke-linecap="round" stroke-linejoin="round"><path d="M1.500 10h18M12 2.500l7.500 7.500-7.500 7.500"/></svg><span class="t" style="left:353.0px;top:656.3px;font-size:29.30px;color:#373947;-webkit-text-stroke:0.60px #373947;transform:scaleX(1.0390);">Travemünde, DE</span><svg class="abs" style="left:80.6px;top:598.3px" width="47.0" height="34.0" viewBox="0 0 47 34"><path fill="#53b3bd" d="M2.200 0h23.300c1.200 0 1.700.4 2.100 1.400l.9 2.100h8.100c2 0 3.100.9 3.500 2.800l1.600 7.700 3.600 1.600c.8.400 1.100.9 1.100 1.800v8.300c0 1.300-.8 2.100-2.100 2.100h-42.100c-1.300 0-2.200-.8-2.200-2.100v-23.600c0-1.300.9-2.100 2.200-2.100z"/><path fill="#fff" d="M29 7h6.200l1 5.700h-7.200z"/><circle cx="10.400" cy="27.400" r="7.500" fill="#fff"/><circle cx="31.800" cy="27.400" r="7.500" fill="#fff"/><circle cx="10.400" cy="27.400" r="5.700" fill="#53b3bd"/><circle cx="31.800" cy="27.400" r="5.700" fill="#53b3bd"/></svg><svg class="abs" style="left:1516px;top:599.9px" width="320" height="30" viewBox="1696 0 320 30"><g transform="translate(0,15)">
<path d="M1709 0H1803" stroke="#ebebee" stroke-width="4.200"/><path d="M1906 0H1989" stroke="#ebebee" stroke-width="4.200"/>
<circle cx="1709" r="9.900" fill="#ebebee"/><circle cx="1989.300" r="9.900" fill="#ebebee"/>
<path d="M1803 0H1836.800" stroke="#53b3bd" stroke-width="4.200"/><circle cx="1802.800" r="9.900" fill="#53b3bd"/>
<path d="M1849.200 -9l15.600 9-15.600 9z" fill="#53b3bd"/>
<path d="M1876.400 0H1887M1905 0h3" stroke="#a9aab9" stroke-width="4.200"/>
<circle cx="1895.800" r="8" fill="#fff" stroke="#53b3bd" stroke-width="3.800"/></g></svg><svg class="abs" style="left:2342.4px;top:595.9px" width="40" height="40" viewBox="0 0 40 40"><path d="M20.0 3.9L25.1 14.5L36.7 16.1L28.2 24.2L30.3 35.7L20.0 30.1L9.7 35.7L11.8 24.2L3.3 16.1L14.9 14.5Z" fill="none" stroke="#b6b7c9" stroke-width="2.700" stroke-linejoin="round"/></svg><div class="hr" style="top:247.5px"></div><div class="hr" style="top:491.7px"></div></div></main><aside><div id="redbox"></div><section id="qa"></section><svg class="abs" style="left:3090px;top:830px" width="100" height="80" viewBox="3090 830 100 80"><path d="M3123.9 858.2L3152.0 868.8L3152.0 897.3L3127.1 887.0L3124.1 884.0ZM3155.3 868.8L3179.8 856.2L3179.8 883.7L3177.5 886.3L3155.3 897.3ZM3127.1 854.7L3137.8 849.2L3162.2 860.8L3153.6 865.8ZM3143.0 847.4L3152.0 842.7L3176.8 852.9L3167.2 858.2Z" fill="#fff" stroke="#fff" stroke-width="1" stroke-linejoin="round"/><g stroke="#fff" stroke-width="3.700" stroke-linecap="round"><path d="M3112.2 853.3L3116.2 855.5"/><path d="M3107.8 862.6L3116.2 866.8"/><path d="M3102.3 871.6L3116.2 878.7"/></g></svg><h2 class="t" style="left:3199.8px;top:843.3px;font-size:38.70px;color:#fff;font-weight:700;transform:scaleX(0.9817);">Quick access</h2><div id="qascroll"><div class="w" style="top:0;height:240px"></div><span class="t" style="left:101.2px;top:62.4px;font-size:76.00px;color:#373947;-webkit-text-stroke:1.50px #373947;">5</span><span class="t" style="left:49.6px;top:136.9px;font-size:27.20px;color:#84859b;-webkit-text-stroke:0.60px #84859b;transform:scaleX(1.1255);">Shipments</span><svg class="abs" style="left:237.6px;top:33.8px" width="21.0" height="21.0" viewBox="0 0 21 21" fill="none" stroke="#53b3bd"><rect x="1" y="4.300" width="18.500" height="15.500" rx="1.800" stroke-width="1.700"/><path d="M1 6.200h18.500" stroke-width="3.400"/><path d="M5.800 0v5M14.800 0v5" stroke-width="1.900"/></svg><span class="t" style="left:282.7px;top:33.5px;font-size:27.20px;color:#84859b;-webkit-text-stroke:0.60px #84859b;transform:scaleX(1.1187);">All active</span><svg class="abs" style="left:233.2px;top:76.8px" width="30" height="30" viewBox="0 0 30 30"><ellipse cx="15" cy="25.300" rx="12.700" ry="3" fill="none" stroke="#53b3bd" stroke-width="2.700"/><path d="M15 1c-4.900 0-8.800 3.800-8.800 8.600 0 5.600 6.300 11.500 8.800 15.200 2.500-3.700 8.800-9.600 8.800-15.200 0-4.800-3.900-8.600-8.800-8.600z" fill="#53b3bd"/><circle cx="15" cy="9.300" r="3.600" fill="#fff"/></svg><span class="t" style="left:282.7px;top:81.5px;font-size:27.20px;color:#84859b;letter-spacing:0.45px;-webkit-text-stroke:0.60px #84859b;transform:scaleX(1.1300);">All</span><svg class="abs" style="left:235.0px;top:128.0px" width="26" height="26" viewBox="-11.300 -11.300 22.600 22.600"><g fill="#53b3bd"><path d="M-1.500 -9.800h3v3h1.600c1.500 0 2.500 1 2.500 2.500v1.500c-1.800-.5-3.700-.9-5.600-.9s-3.800.4-5.600.9v-1.500c0-1.500 1-2.500 2.500-2.500h1.600z"/><path d="M-8.300 -.5c2.400-1 5-1.700 7.700-2v9.100c-.6.300-1.400.900-2.500.900s-1.900-.9-3-1.100l-1-1.900z"/><path d="M8.300 -.5c-2.400-1-5-1.700-7.700-2v9.100c.6.300 1.400.900 2.500.900s1.900-.9 3-1.100l1-1.900z"/></g><path d="M-10.200 9.400c1.700 0 1.700-1.500 3.400-1.500s1.700 1.500 3.400 1.500 1.700-1.500 3.400-1.500 1.700 1.500 3.400 1.500 1.700-1.500 3.400-1.500 1.700 1.500 3.400 1.500" fill="none" stroke="#53b3bd" stroke-width="1.700"/></svg><span class="t" style="left:282.7px;top:129.5px;font-size:27.20px;color:#84859b;letter-spacing:0.45px;-webkit-text-stroke:0.60px #84859b;transform:scaleX(1.1300);">All</span><svg class="abs" style="left:233.0px;top:173.5px" width="30" height="30" viewBox="0 0 30 30" fill="none" stroke="#53b3bd" stroke-width="1.800" stroke-linecap="round"><path d="M5 24.500h-1.500a2 2 0 0 1-2-2v-18.500a2 2 0 0 1 2-2h23a2 2 0 0 1 2 2v18.500a2 2 0 0 1-2 2h-1.500"/><path d="M1.500 7h27"/><circle cx="15" cy="20.500" r="7.300"/><path d="M15 13v-2.500M12.500 10.300h5M15 20.500l3-4"/></svg><span class="t" style="left:281.3px;top:177.5px;font-size:27.20px;color:#84859b;-webkit-text-stroke:0.60px #84859b;transform:scaleX(1.0311);">Early</span><svg class="abs" style="left:472.5px;top:107.3px" width="16" height="26" viewBox="0 0 16 26" fill="none" stroke="#b3b4c6" stroke-width="4.400" stroke-linecap="round" stroke-linejoin="round"><path d="M4 5l8 8-8 8"/></svg><div class="w" style="top:260px;height:212px"></div><span class="t" style="left:188.4px;top:286.6px;font-size:27.50px;color:#84859b;-webkit-text-stroke:0.45px #84859b;transform:scaleX(1.0570);">Tons of CO2e</span><svg class="abs" style="left:100.0px;top:322.0px" width="90" height="80" viewBox="0 0 1358 1207"><g fill="#53b3bd"><path d="M215 598L412 632Q426 637 422 655L350 968Q347 980 333 980L222 980Q208 980 208 966L208 612Q208 597 215 598Z"/><path d="M460 695C540 690 620 730 700 740C760 748 820 750 850 775C872 800 862 836 820 843C760 852 690 850 640 838C665 872 760 886 860 875C930 850 980 815 1030 815C1082 815 1102 860 1075 892C1020 942 900 1006 790 1040C740 1053 700 1051 660 1036L400 930Z"/><path d="M390 212C470 198 592 240 609 330C613 360 601 382 590 392C550 422 490 420 450 380C420 340 422 262 390 212Z"/><path d="M1085 243C960 238 790 290 715 390C680 440 674 490 700 520C760 602 850 652 940 602C1000 562 1020 480 1035 400C1045 330 1070 290 1085 243Z"/></g><path d="M592 388C640 470 682 580 700 688C716 630 740 585 765 555" fill="none" stroke="#53b3bd" stroke-width="32" stroke-linecap="round" stroke-linejoin="round"/><path d="M868 372C810 420 760 478 716 548" fill="none" stroke="#fff" stroke-width="27" stroke-linecap="round"/></svg><span class="t" style="left:198.0px;top:321.5px;font-size:78.00px;color:#373947;-webkit-text-stroke:1.50px #373947;transform:scaleX(1.1175);">4.06</span><svg class="abs" style="left:198.0px;top:409.5px" width="21.6" height="21.6" viewBox="0 0 21 21" fill="none" stroke="#53b3bd"><rect x="1" y="4.300" width="18.500" height="15.500" rx="1.800" stroke-width="1.700"/><path d="M1 6.200h18.500" stroke-width="3.400"/><path d="M5.800 0v5M14.800 0v5" stroke-width="1.900"/></svg><span class="t" style="left:242.4px;top:408.9px;font-size:27.20px;color:#84859b;-webkit-text-stroke:0.60px #84859b;transform:scaleX(1.0453);">This year</span><div class="w" style="top:492px;height:240px"></div><span class="t" style="left:80.6px;top:554.4px;font-size:76.00px;color:#373947;-webkit-text-stroke:1.30px #373947;transform:scaleX(0.9450);">12</span><span class="t" style="left:49.6px;top:628.9px;font-size:27.20px;color:#84859b;-webkit-text-stroke:0.60px #84859b;transform:scaleX(1.1255);">Shipments</span><svg class="abs" style="left:237.6px;top:525.8px" width="21.0" height="21.0" viewBox="0 0 21 21" fill="none" stroke="#53b3bd"><rect x="1" y="4.300" width="18.500" height="15.500" rx="1.800" stroke-width="1.700"/><path d="M1 6.200h18.500" stroke-width="3.400"/><path d="M5.800 0v5M14.800 0v5" stroke-width="1.900"/></svg><span class="t" style="left:282.7px;top:525.5px;font-size:27.20px;color:#84859b;-webkit-text-stroke:0.60px #84859b;transform:scaleX(1.1187);">All active</span><svg class="abs" style="left:233.2px;top:568.8px" width="30" height="30" viewBox="0 0 30 30"><ellipse cx="15" cy="25.300" rx="12.700" ry="3" fill="none" stroke="#53b3bd" stroke-width="2.700"/><path d="M15 1c-4.900 0-8.800 3.800-8.800 8.600 0 5.600 6.300 11.500 8.800 15.200 2.500-3.700 8.800-9.600 8.800-15.200 0-4.800-3.900-8.600-8.800-8.600z" fill="#53b3bd"/><circle cx="15" cy="9.300" r="3.600" fill="#fff"/></svg><span class="t" style="left:282.7px;top:573.5px;font-size:27.20px;color:#84859b;letter-spacing:0.45px;-webkit-text-stroke:0.60px #84859b;transform:scaleX(1.1300);">All</span><svg class="abs" style="left:236.0px;top:623.5px" width="24" height="18" viewBox="0 0 47 34"><path fill="#53b3bd" d="M2.200 0h23.300c1.200 0 1.700.4 2.100 1.400l.9 2.100h8.100c2 0 3.100.9 3.500 2.800l1.600 7.700 3.600 1.600c.8.400 1.100.9 1.100 1.800v8.300c0 1.300-.8 2.100-2.100 2.100h-42.100c-1.300 0-2.200-.8-2.200-2.100v-23.600c0-1.300.9-2.100 2.200-2.100z"/><path fill="#fff" d="M29 7h6.200l1 5.700h-7.200z"/><circle cx="10.400" cy="27.400" r="7.500" fill="#fff"/><circle cx="31.800" cy="27.400" r="7.500" fill="#fff"/><circle cx="10.400" cy="27.400" r="5.700" fill="#53b3bd"/><circle cx="31.800" cy="27.400" r="5.700" fill="#53b3bd"/></svg><span class="t" style="left:280.9px;top:621.5px;font-size:27.20px;color:#84859b;-webkit-text-stroke:0.60px #84859b;transform:scaleX(1.0801);">Road</span><svg class="abs" style="left:472.5px;top:599.3px" width="16" height="26" viewBox="0 0 16 26" fill="none" stroke="#b3b4c6" stroke-width="4.400" stroke-linecap="round" stroke-linejoin="round"><path d="M4 5l8 8-8 8"/></svg></div><div id="addbtn"></div><svg class="abs" style="left:3252px;top:1635.700px" width="40" height="40" viewBox="0 0 40 40"><circle cx="20" cy="20" r="19.400" fill="#fff"/><path d="M20 11.600v16.800M11.600 20h16.800" stroke="#53b3bd" stroke-width="5" stroke-linecap="round"/></svg><span class="t" style="left:3312.2px;top:1640.6px;font-size:27.70px;color:#fff;font-weight:700;transform:scaleX(1.0389);">Add widget</span><div id="addred"></div><div id="redframe"></div></aside></body></html>
